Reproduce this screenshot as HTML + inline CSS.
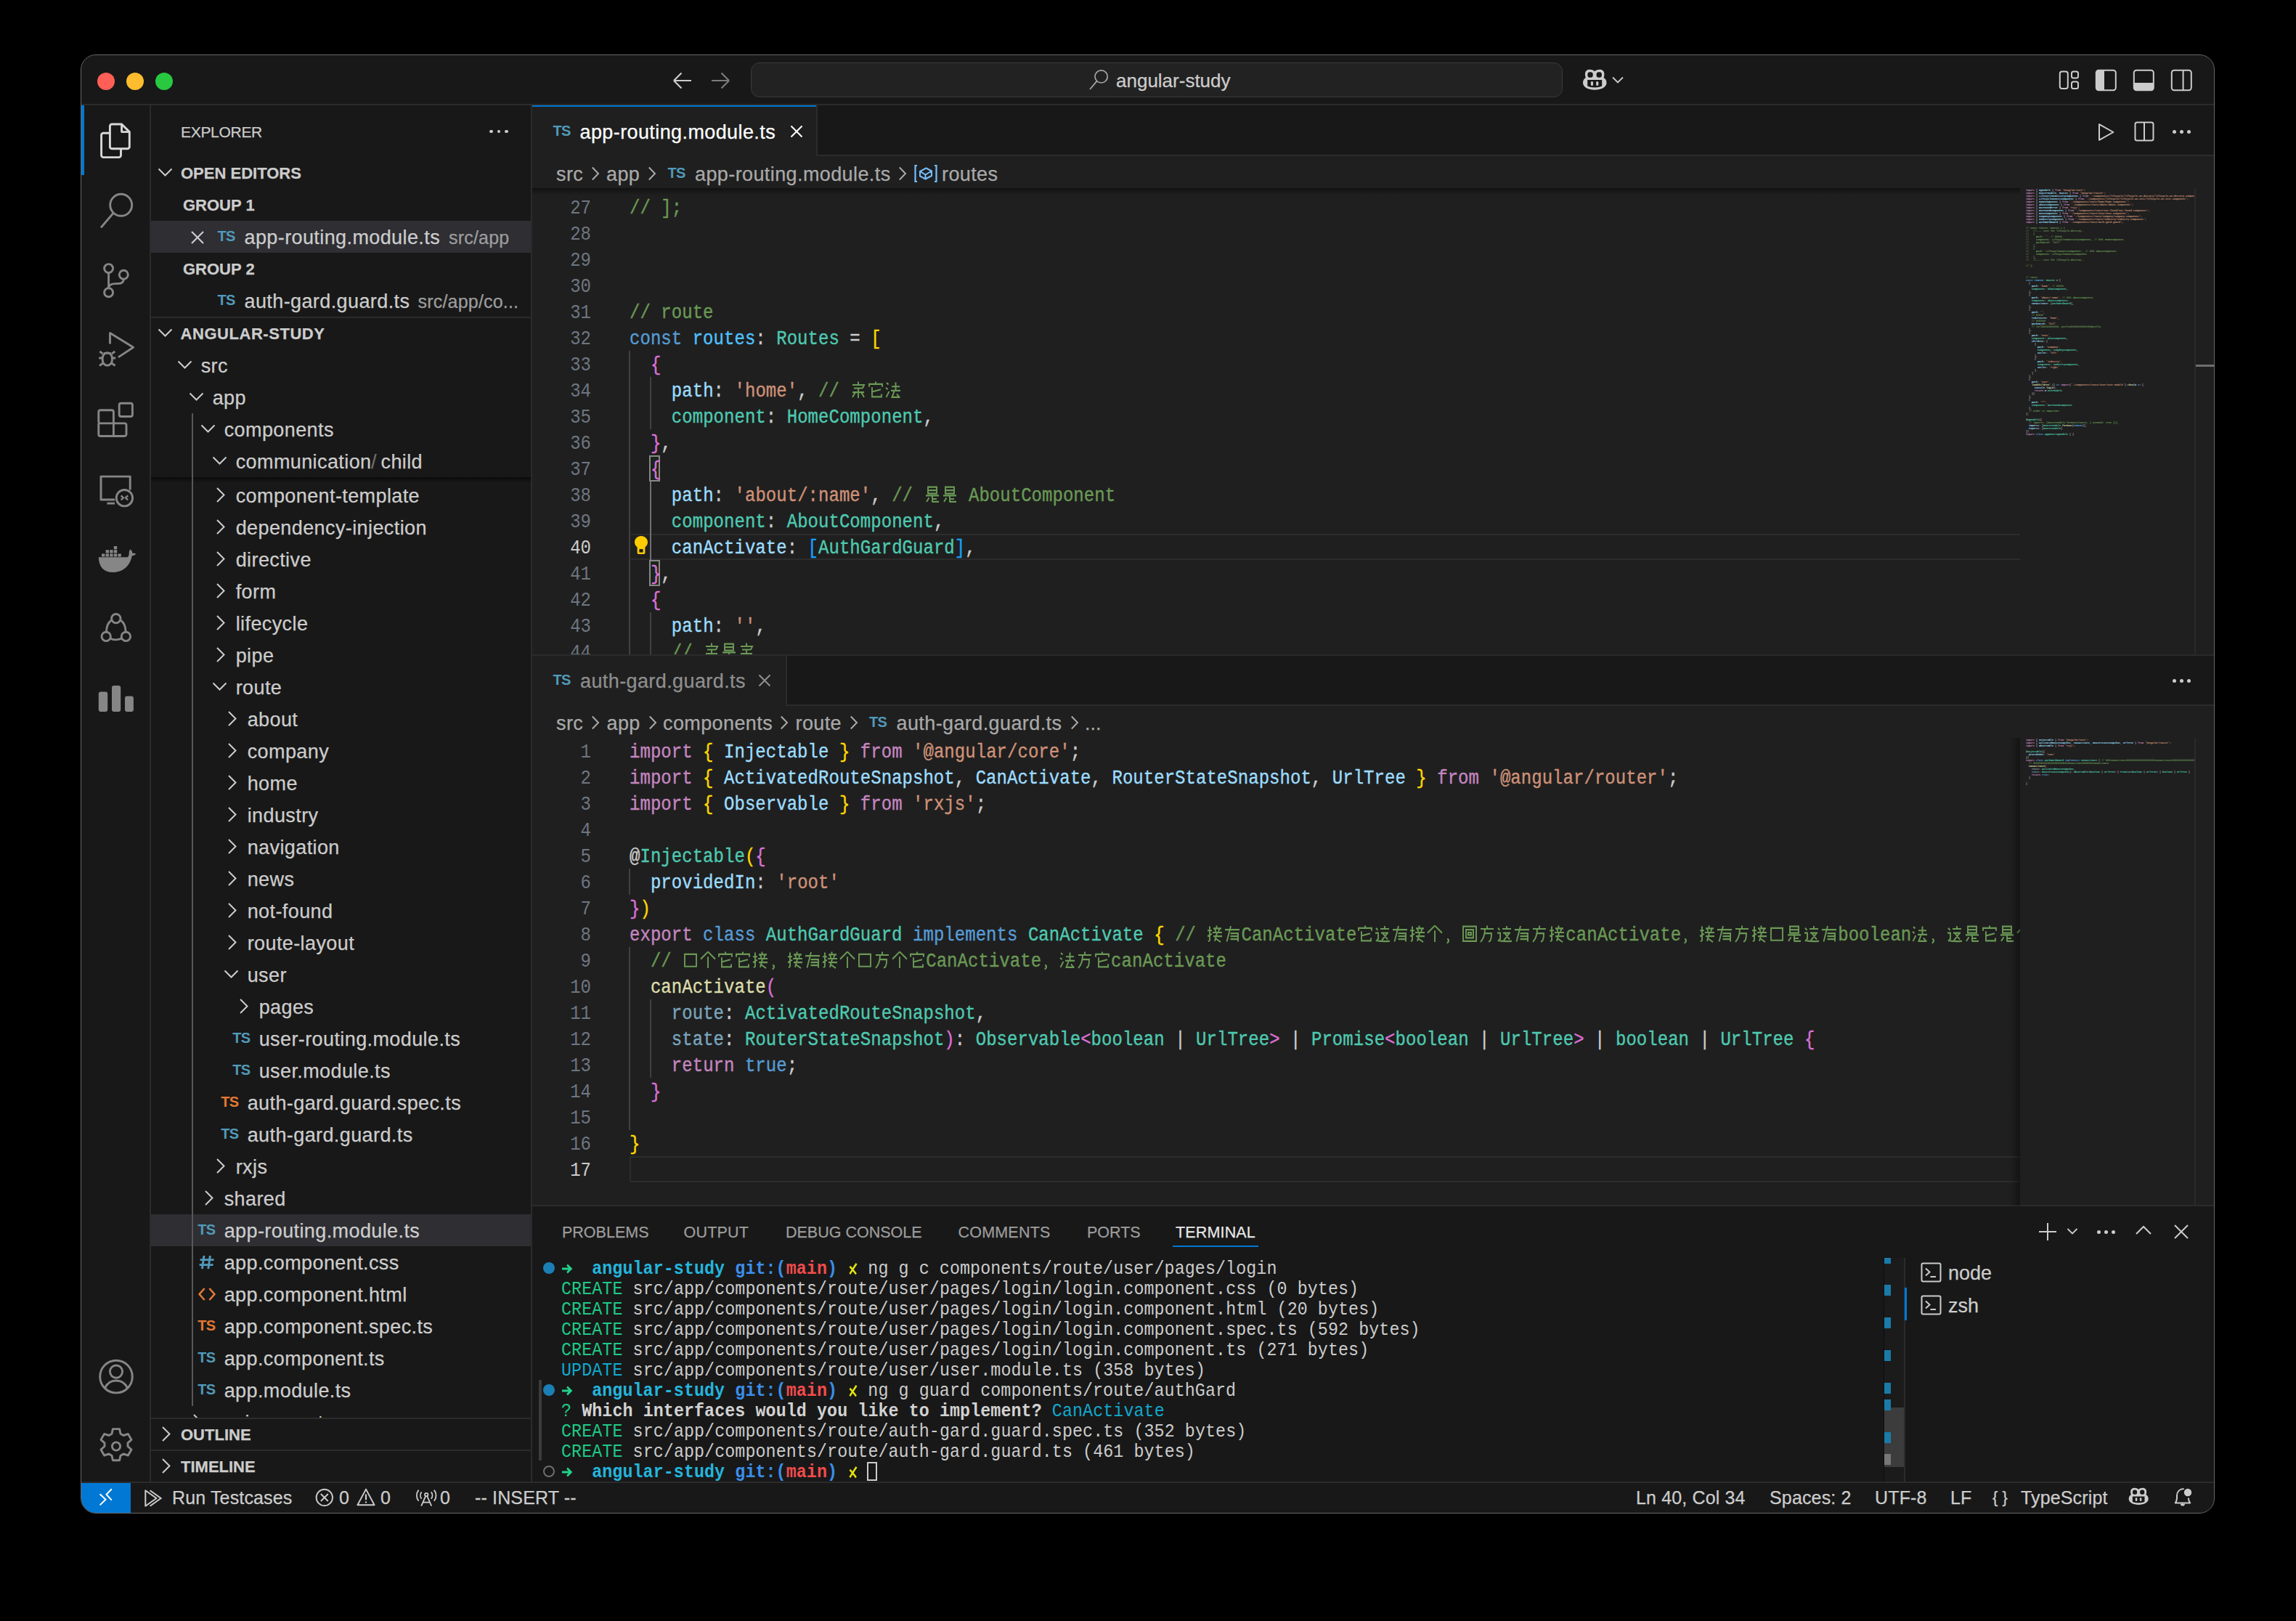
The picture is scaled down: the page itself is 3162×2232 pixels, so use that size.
<!DOCTYPE html><html><head><meta charset='utf-8'><style>
*{box-sizing:border-box;margin:0;padding:0}
html,body{width:3162px;height:2232px;background:#000;overflow:hidden}
body{position:relative;font-family:"Liberation Sans",sans-serif;color:#cccccc}
.a{position:absolute}
#win{position:absolute;left:0;top:0;width:3162px;height:2232px;clip-path:inset(76px 113px 149px 112px round 20px);background:#181818}
#frame{position:absolute;left:111px;top:75px;width:2939px;height:2009px;border:1.5px solid #676767;border-radius:21px;pointer-events:none}
.mono{font-family:"Liberation Mono",monospace}
.nw{white-space:pre}
svg{display:block;overflow:visible}
.t{position:absolute;white-space:pre;line-height:1;-webkit-text-stroke:0.25px currentColor}
</style></head><body><div id='win'><div class='a' style='left:112px;top:143px;width:2937px;height:2px;background:#2b2b2b;'></div><div class='a' style='left:206px;top:145px;width:2px;height:1896px;background:#2b2b2b;'></div><div class='a' style='left:731px;top:145px;width:2px;height:1896px;background:#2b2b2b;'></div><div class='a' style='left:733px;top:145px;width:2316px;height:1515px;background:#1f1f1f;'></div><div class='a' style='left:733px;top:1660px;width:2316px;height:381px;background:#181818;'></div><div class='a' style='left:733px;top:1659px;width:2316px;height:2px;background:#2b2b2b;'></div><div class='a' style='left:112px;top:2040px;width:2937px;height:2px;background:#2b2b2b;'></div><div class='a' style='left:133.8px;top:99.8px;width:24.4px;height:24.4px;border-radius:50%;background:#ff5f57'></div><div class='a' style='left:173.8px;top:99.8px;width:24.4px;height:24.4px;border-radius:50%;background:#febc2e'></div><div class='a' style='left:213.8px;top:99.8px;width:24.4px;height:24.4px;border-radius:50%;background:#28c840'></div><svg class='a' style='left:926px;top:98px;' width='28' height='26' viewBox='0 0 28 26'><path d='M2 13H26M2 13L12.5 2.5M2 13L12.5 23.5' stroke='#cccccc' stroke-width='2.2' fill='none'/></svg><svg class='a' style='left:978px;top:98px;' width='28' height='26' viewBox='0 0 28 26'><path d='M26 13H2M26 13L15.5 2.5M26 13L15.5 23.5' stroke='#7b7b7b' stroke-width='2.2' fill='none'/></svg><div class='a' style='left:1034px;top:86px;width:1118px;height:48px;border-radius:12px;background:#222222;border:1.5px solid #3b3b3b'></div><svg class='a' style='left:1498px;top:94px;' width='32' height='32' viewBox='0 0 32 32'><circle cx='18.6' cy='11.4' r='8.6' stroke='#a6a6a6' stroke-width='1.7' fill='none'/><path d='M12.6 17.6L3 29' stroke='#a6a6a6' stroke-width='1.8' fill='none'/></svg><div class='t' style='left:1537px;top:81.0px;height:60px;line-height:60px;font-family:"Liberation Sans";font-size:26px;color:#cccccc;font-weight:normal;letter-spacing:0px;'>angular-study</div><svg class='a' style='left:2178px;top:94px;' width='36' height='32' viewBox='0 0 36 32'><path fill='#cccccc' d='M5 8C5 3.5 8 1.8 11.5 1.8c3 0 5.3 1 6.7 2.4 1.4-1.4 3.7-2.4 6.7-2.4 3.5 0 6.5 1.7 6.5 6.2 0 2.5-.4 4-.9 5 2.5 1.5 4 3.8 4 7 0 6-7.5 9.8-16.3 9.8S2 26 2 20c0-3.2 1.4-5.5 3.9-7-.5-1-.9-2.5-.9-5z'/><rect x='8.4' y='5.3' width='7.3' height='7.5' rx='3' fill='#181818'/><rect x='20.6' y='5.3' width='7.3' height='7.5' rx='3' fill='#181818'/><path fill='#181818' d='M8.2 16H28.2V24.6c-2.4 1.3-5.9 2-10 2s-7.6-.7-10-2z'/><rect x='12.9' y='18' width='3.1' height='5.9' rx='1.5' fill='#cccccc'/><rect x='20.2' y='18' width='3.1' height='5.9' rx='1.5' fill='#cccccc'/></svg><svg class='a' style='left:2219px;top:104px;' width='18' height='12' viewBox='0 0 18 12'><path d='M2 2.5L9 9.5L16 2.5' stroke='#cccccc' stroke-width='1.8' fill='none'/></svg><svg class='a' style='left:2834px;top:96px;' width='30' height='28' viewBox='0 0 30 28'><rect x='2.8' y='2.6' width='11' height='23.4' rx='3' stroke='#cccccc' stroke-width='2' fill='none'/><rect x='19' y='2.6' width='9' height='9' rx='2.5' stroke='#cccccc' stroke-width='2' fill='none'/><rect x='19' y='16.6' width='9' height='9.4' rx='2.5' stroke='#cccccc' stroke-width='2' fill='none'/></svg><svg class='a' style='left:2884px;top:94px;' width='32' height='32' viewBox='0 0 32 32'><rect x='2.8' y='2.8' width='27' height='27.4' rx='3.5' stroke='#cccccc' stroke-width='2' fill='none'/><path d='M3 6.3a3.5 3.5 0 0 1 3.5-3.5H14V30.2H6.5A3.5 3.5 0 0 1 3 26.7z' fill='#cccccc'/></svg><svg class='a' style='left:2936px;top:94px;' width='32' height='32' viewBox='0 0 32 32'><rect x='2.8' y='2.8' width='27' height='27.4' rx='3.5' stroke='#cccccc' stroke-width='2' fill='none'/><path d='M3 20H29.8V26.7a3.5 3.5 0 0 1-3.5 3.5H6.5A3.5 3.5 0 0 1 3 26.7z' fill='#cccccc'/></svg><svg class='a' style='left:2988px;top:94px;' width='32' height='32' viewBox='0 0 32 32'><rect x='2.8' y='2.8' width='27' height='27.4' rx='3.5' stroke='#cccccc' stroke-width='2' fill='none'/><path d='M18.6 3V30' stroke='#cccccc' stroke-width='2'/></svg><div class='a' style='left:112px;top:145px;width:4px;height:96px;background:#0078d4;'></div><svg class='a' style='left:112px;top:145px' width='96' height='96' viewBox='0 0 96 96' fill='none' stroke='#d7d7d7' stroke-width='2.9' stroke-linejoin='round'><path d='M42.4 26H55.6L66.3 36.6V56.9a2.8 2.8 0 0 1-2.8 2.8H42.2a2.8 2.8 0 0 1-2.8-2.8V28.8A2.8 2.8 0 0 1 42.2 26z'/><path d='M55.6 26.4V36.6H66'/><path d='M39.4 38.3H30.4a2.8 2.8 0 0 0-2.8 2.8V68.8a2.8 2.8 0 0 0 2.8 2.8H51.7a2.8 2.8 0 0 0 2.8-2.8V59.7'/></svg><svg class='a' style='left:112px;top:241px' width='96' height='96' viewBox='0 0 96 96' fill='none' stroke='#868686' stroke-width='2.9' stroke-linejoin='round'><circle cx='54.7' cy='41.3' r='15'/><path d='M44 52.5L27 72.4'/></svg><svg class='a' style='left:112px;top:338px' width='96' height='96' viewBox='0 0 96 96' fill='none' stroke='#868686' stroke-width='2.9' stroke-linejoin='round'><circle cx='37.6' cy='31.6' r='6'/><circle cx='37.6' cy='64.7' r='6'/><circle cx='58.3' cy='40.3' r='6'/><path d='M37.6 37.6V58.7'/><path d='M58.3 46.3C58.3 52 54 52.6 47 52.6 41 52.6 37.6 54.5 37.6 58.7'/></svg><svg class='a' style='left:112px;top:434px' width='96' height='96' viewBox='0 0 96 96' fill='none' stroke='#868686' stroke-width='2.9' stroke-linejoin='round'><path d='M39.5 39.4V24.6L71.6 44.3L50.9 57.9'/><path d='M35.8 51.8c4 0 6.6 3.4 6.6 7.4v2.6c0 4-2.8 7.4-6.6 7.4s-6.6-3.4-6.6-7.4v-2.6c0-4 2.6-7.4 6.6-7.4zM29 59H24.2M42.4 59h4.8M29.2 66.5l-4.2 3M42.4 66.5l4.2 3M29.4 53.2L25.4 49.9M42.2 53.2l4-3.3M30.6 52.4h10.4'/></svg><svg class='a' style='left:112px;top:530px' width='96' height='96' viewBox='0 0 96 96' fill='none' stroke='#868686' stroke-width='2.9' stroke-linejoin='round'><path d='M26.3 34.8H41.9a2.5 2.5 0 0 1 2.5 2.5V52.9H26.3a2.5 2.5 0 0 1-2.5-2.5V37.3a2.5 2.5 0 0 1 2.5-2.5z'/><path d='M23.8 52.9V68a2.5 2.5 0 0 0 2.5 2.5H44.4V52.9M44.4 52.9H59.5a2.5 2.5 0 0 1 2.5 2.5V68a2.5 2.5 0 0 1-2.5 2.5H44.4'/><rect x='52.2' y='25.3' width='18.2' height='18.2' rx='2.5'/></svg><svg class='a' style='left:112px;top:628px' width='96' height='96' viewBox='0 0 96 96' fill='none' stroke='#868686' stroke-width='2.9' stroke-linejoin='round'><path d='M46 60H27V28.1H67.2V46.6'/><path d='M35.4 65.1H46'/><circle cx='59.4' cy='57.7' r='11.2'/><path d='M54.6 54.4l3.4 3-3.4 3M64.2 54.4l-3.4 3 3.4 3' stroke-width='2.4'/></svg><svg class='a' style='left:112px;top:723px' width='96' height='96' viewBox='0 0 96 96' fill='none' stroke='#868686' stroke-width='2.9' stroke-linejoin='round'><path d='M23.8 44.2H63.5c1.6-1 2.4-3.2 2.2-5.8-.1-1.4.5-3.5 1.8-4.9 1.9 1.3 2.9 3.4 3 5.5 1.5-.5 3.6-.4 4.6.5-.9 1.9-3 2.7-5.2 2.7C67.1 55.6 58.2 65 43.4 65 31 65 24.2 57.6 23.8 44.2z' fill='#868686' stroke='none'/><path d='M28 39.4h4.4v4.2H28zM33.6 39.4H38v4.2h-4.4zM39.2 39.4h4.4v4.2h-4.4zM44.8 39.4h4.4v4.2h-4.4zM50.4 39.4h4.4v4.2h-4.4zM33.6 34.2H38v4.2h-4.4zM39.2 34.2h4.4v4.2h-4.4zM44.8 34.2h4.4v4.2h-4.4zM44.8 29h4.4v4.2h-4.4z' fill='#868686' stroke='none'/></svg><svg class='a' style='left:112px;top:816px' width='96' height='96' viewBox='0 0 96 96' fill='none' stroke='#868686' stroke-width='2.9' stroke-linejoin='round'><circle cx='47.8' cy='35.7' r='6.2'/><circle cx='34.2' cy='60.4' r='6.2'/><circle cx='61.4' cy='60.4' r='6.2'/><path d='M41.8 37.6C37.4 40.6 34.6 46.4 34.4 54.2M53.8 37.6c4.4 3 7.2 8.8 7.4 16.6M40.2 63.2c4.6 2.2 10 2.2 15.2 0'/></svg><svg class='a' style='left:112px;top:914px' width='96' height='96' viewBox='0 0 96 96' fill='none' stroke='#868686' stroke-width='2.9' stroke-linejoin='round'><rect x='23.8' y='38.6' width='12.4' height='27.3' rx='3' fill='#868686' stroke='none'/><rect x='42' y='29.9' width='12.2' height='36' rx='3' fill='#868686' stroke='none'/><rect x='60' y='44.4' width='11.9' height='21.5' rx='3' fill='#868686' stroke='none'/></svg><svg class='a' style='left:112px;top:1848px' width='96' height='96' viewBox='0 0 96 96' fill='none' stroke='#868686' stroke-width='2.9' stroke-linejoin='round'><circle cx='48' cy='47.6' r='22.3'/><circle cx='48' cy='40.6' r='8.6'/><path d='M32.6 63.2c3-6.8 8.6-10.2 15.4-10.2s12.4 3.4 15.4 10.2'/></svg><svg class='a' style='left:112px;top:1943px' width='96' height='96' viewBox='0 0 96 96' fill='none' stroke='#868686' stroke-width='2.9' stroke-linejoin='round'><path d='M43.4 24.6h9.2l1.4 6.6 4 2.3 6.4-2.1 4.6 8-5 4.5v4.6l5 4.5-4.6 8-6.4-2.1-4 2.3-1.4 6.6h-9.2l-1.4-6.6-4-2.3-6.4 2.1-4.6-8 5-4.5v-4.6l-5-4.5 4.6-8 6.4 2.1 4-2.3z'/><circle cx='48' cy='48.5' r='5.6'/></svg><div class='a' style='left:112px;top:2042px;width:68px;height:41px;background:#0078d4'></div><svg class='a' style='left:112px;top:2040px;' width='70' height='44' viewBox='0 0 70 44'><path d='M25.6 17.3L33.5 24.8L25.6 32.4M41.8 10.2L34.5 17.8L41.8 25.6' stroke='#ffffff' stroke-width='2' fill='none'/></svg><svg class='a' style='left:192px;top:2040px;' width='36' height='44' viewBox='0 0 36 44'><path d='M8.3 12.3L23.5 23L8.3 33.7z' stroke='#cccccc' stroke-width='2' fill='none' stroke-linejoin='round'/><path d='M14.6 12.3L29.6 23L14.6 33.7' stroke='#cccccc' stroke-width='2' fill='none'/></svg><div class='t' style='left:237px;top:2032.0px;height:60px;line-height:60px;font-family:"Liberation Sans";font-size:25px;color:#cccccc;font-weight:normal;letter-spacing:0.15px;'>Run Testcases</div><svg class='a' style='left:430px;top:2040px;' width='34' height='44' viewBox='0 0 34 44'><circle cx='16.8' cy='22' r='11.2' stroke='#cccccc' stroke-width='1.9' fill='none'/><path d='M11.8 17L21.8 27M21.8 17L11.8 27' stroke='#cccccc' stroke-width='1.9'/></svg><div class='t' style='left:467px;top:2032.0px;height:60px;line-height:60px;font-family:"Liberation Sans";font-size:25px;color:#cccccc;font-weight:normal;letter-spacing:0.15px;'>0</div><svg class='a' style='left:488px;top:2040px;' width='32' height='44' viewBox='0 0 32 44'><path d='M16 10.6L27.6 32.2H4.4z' stroke='#cccccc' stroke-width='1.9' fill='none' stroke-linejoin='round'/><path d='M16 17.6V25.2M16 27.4V29.6' stroke='#cccccc' stroke-width='2.2'/></svg><div class='t' style='left:524px;top:2032.0px;height:60px;line-height:60px;font-family:"Liberation Sans";font-size:25px;color:#cccccc;font-weight:normal;letter-spacing:0.15px;'>0</div><svg class='a' style='left:570px;top:2040px;' width='34' height='44' viewBox='0 0 34 44'><path d='M6.6 11.6a12 12 0 0 0 0 15.2M10.6 14.4a7.4 7.4 0 0 0 0 9.4M27.8 11.6a12 12 0 0 1 0 15.2M23.8 14.4a7.4 7.4 0 0 1 0 9.4' stroke='#cccccc' stroke-width='1.8' fill='none'/><circle cx='17.2' cy='18' r='2.2' stroke='#cccccc' stroke-width='1.8' fill='none'/><path d='M16 20.4L10.2 33.6M18.4 20.4L24.2 33.6M12.6 28.6H21.8' stroke='#cccccc' stroke-width='1.8' fill='none'/></svg><div class='t' style='left:606px;top:2032.0px;height:60px;line-height:60px;font-family:"Liberation Sans";font-size:25px;color:#cccccc;font-weight:normal;letter-spacing:0.15px;'>0</div><div class='t' style='left:654px;top:2032.0px;height:60px;line-height:60px;font-family:"Liberation Sans";font-size:25px;color:#cccccc;font-weight:normal;letter-spacing:0.15px;'>-- INSERT --</div><div class='t' style='left:2253px;top:2032.0px;height:60px;line-height:60px;font-family:"Liberation Sans";font-size:25px;color:#cccccc;font-weight:normal;letter-spacing:0.15px;'>Ln 40, Col 34</div><div class='t' style='left:2437px;top:2032.0px;height:60px;line-height:60px;font-family:"Liberation Sans";font-size:25px;color:#cccccc;font-weight:normal;letter-spacing:0.15px;'>Spaces: 2</div><div class='t' style='left:2582px;top:2032.0px;height:60px;line-height:60px;font-family:"Liberation Sans";font-size:25px;color:#cccccc;font-weight:normal;letter-spacing:0.15px;'>UTF-8</div><div class='t' style='left:2686px;top:2032.0px;height:60px;line-height:60px;font-family:"Liberation Sans";font-size:25px;color:#cccccc;font-weight:normal;letter-spacing:0.15px;'>LF</div><div class='t' style='left:2744px;top:2032.0px;height:60px;line-height:60px;font-family:"Liberation Sans";font-size:22px;color:#cccccc;font-weight:normal;letter-spacing:0px;'>{ }</div><div class='t' style='left:2783px;top:2032.0px;height:60px;line-height:60px;font-family:"Liberation Sans";font-size:25px;color:#cccccc;font-weight:normal;letter-spacing:0.15px;'>TypeScript</div><svg class='a' style='left:2930px;top:2047px;' width='30' height='27' viewBox='0 0 36 32'><path fill='#cccccc' d='M5 8C5 3.5 8 1.8 11.5 1.8c3 0 5.3 1 6.7 2.4 1.4-1.4 3.7-2.4 6.7-2.4 3.5 0 6.5 1.7 6.5 6.2 0 2.5-.4 4-.9 5 2.5 1.5 4 3.8 4 7 0 6-7.5 9.8-16.3 9.8S2 26 2 20c0-3.2 1.4-5.5 3.9-7-.5-1-.9-2.5-.9-5z'/><rect x='8.4' y='5.3' width='7.3' height='7.5' rx='3' fill='#181818'/><rect x='20.6' y='5.3' width='7.3' height='7.5' rx='3' fill='#181818'/><path fill='#181818' d='M8.2 16H28.2V24.6c-2.4 1.3-5.9 2-10 2s-7.6-.7-10-2z'/><rect x='12.9' y='18' width='3.1' height='5.9' rx='1.5' fill='#cccccc'/><rect x='20.2' y='18' width='3.1' height='5.9' rx='1.5' fill='#cccccc'/></svg><svg class='a' style='left:2990px;top:2020px;' width='40' height='60' viewBox='0 0 40 60'><path d='M23.8 42.6c.2 3 .9 5.2 2.4 6.8H5.8c1.5-1.6 2-3.8 2.2-6.8L8 39c.2-5.2 3.8-8.8 9.6-9' stroke='#cccccc' stroke-width='2' fill='none' stroke-linejoin='round'/><path d='M12.8 50.4a3.1 3.1 0 0 0 6.2 0z' fill='#cccccc'/><circle cx='23' cy='35' r='5.2' fill='#cccccc'/></svg><div class='t' style='left:249px;top:152.0px;height:60px;line-height:60px;font-family:"Liberation Sans";font-size:21px;color:#cccccc;font-weight:normal;letter-spacing:-0.3px;'>EXPLORER</div><div class='a' style='left:674.2px;top:178.7px;width:4.6px;height:4.6px;border-radius:50%;background:#cccccc'></div><div class='a' style='left:684.7px;top:178.7px;width:4.6px;height:4.6px;border-radius:50%;background:#cccccc'></div><div class='a' style='left:695.2px;top:178.7px;width:4.6px;height:4.6px;border-radius:50%;background:#cccccc'></div><svg class='a' style='left:217px;top:230px;' width='22' height='16' viewBox='0 0 22 16'><path d='M1.5 2.5L10.5 11.5L19.5 2.5' stroke='#cccccc' stroke-width='2.0' fill='none'/></svg><div class='t' style='left:249px;top:209.0px;height:60px;line-height:60px;font-family:"Liberation Sans";font-size:22px;color:#cccccc;font-weight:bold;letter-spacing:0px;'>OPEN EDITORS</div><div class='t' style='left:252px;top:253.0px;height:60px;line-height:60px;font-family:"Liberation Sans";font-size:22px;color:#cccccc;font-weight:bold;letter-spacing:0px;'>GROUP 1</div><div class='a' style='left:208px;top:304px;width:523px;height:44px;background:#2e2e33;'></div><svg class='a' style='left:261px;top:316px;' width='22' height='22' viewBox='0 0 22 22'><path d='M3 3L19 19M19 3L3 19' stroke='#cccccc' stroke-width='2.2'/></svg><div class='t' style='left:299.5px;top:295px;height:60px;line-height:60px;font-size:20px;font-weight:bold;color:#519aba;letter-spacing:-0.7px;-webkit-text-stroke:0'>TS</div><div class='t' style='left:336.5px;top:297.0px;height:60px;line-height:60px;font-family:"Liberation Sans";font-size:27px;color:#cccccc;font-weight:normal;letter-spacing:0.4px;'>app-routing.module.ts</div><div class='t' style='left:618px;top:297.0px;height:60px;line-height:60px;font-family:"Liberation Sans";font-size:25px;color:#9d9d9d;font-weight:normal;letter-spacing:0.2px;'>src/app</div><div class='t' style='left:252px;top:341.0px;height:60px;line-height:60px;font-family:"Liberation Sans";font-size:22px;color:#cccccc;font-weight:bold;letter-spacing:0px;'>GROUP 2</div><div class='t' style='left:299.5px;top:383px;height:60px;line-height:60px;font-size:20px;font-weight:bold;color:#519aba;letter-spacing:-0.7px;-webkit-text-stroke:0'>TS</div><div class='t' style='left:336.5px;top:385.0px;height:60px;line-height:60px;font-family:"Liberation Sans";font-size:27px;color:#cccccc;font-weight:normal;letter-spacing:0.4px;'>auth-gard.guard.ts</div><div class='t' style='left:575.5px;top:385.0px;height:60px;line-height:60px;font-family:"Liberation Sans";font-size:25px;color:#9d9d9d;font-weight:normal;letter-spacing:0.2px;'>src/app/co...</div><div class='a' style='left:208px;top:436px;width:523px;height:2px;background:#2b2b2b;'></div><svg class='a' style='left:217px;top:451px;' width='22' height='16' viewBox='0 0 22 16'><path d='M1.5 2.5L10.5 11.5L19.5 2.5' stroke='#cccccc' stroke-width='2.0' fill='none'/></svg><div class='t' style='left:248.5px;top:430.0px;height:60px;line-height:60px;font-family:"Liberation Sans";font-size:22px;color:#cccccc;font-weight:bold;letter-spacing:0.55px;'>ANGULAR-STUDY</div><div class='a' style='left:208px;top:657px;width:523px;height:1296px;overflow:hidden'><div class='a' style='left:-208px;top:-657px;width:3162px;height:2232px'><svg class='a' style='left:296.7px;top:671px;' width='14' height='22' viewBox='0 0 14 22'><path d='M2 1L11.5 10.5L2 20' stroke='#cccccc' stroke-width='2.0' fill='none'/></svg><div class='t' style='left:324.7px;top:653.0px;height:60px;line-height:60px;font-family:"Liberation Sans";font-size:27px;color:#cccccc;font-weight:normal;letter-spacing:0.4px;'>component-template</div><svg class='a' style='left:296.7px;top:715px;' width='14' height='22' viewBox='0 0 14 22'><path d='M2 1L11.5 10.5L2 20' stroke='#cccccc' stroke-width='2.0' fill='none'/></svg><div class='t' style='left:324.7px;top:697.0px;height:60px;line-height:60px;font-family:"Liberation Sans";font-size:27px;color:#cccccc;font-weight:normal;letter-spacing:0.4px;'>dependency-injection</div><svg class='a' style='left:296.7px;top:759px;' width='14' height='22' viewBox='0 0 14 22'><path d='M2 1L11.5 10.5L2 20' stroke='#cccccc' stroke-width='2.0' fill='none'/></svg><div class='t' style='left:324.7px;top:741.0px;height:60px;line-height:60px;font-family:"Liberation Sans";font-size:27px;color:#cccccc;font-weight:normal;letter-spacing:0.4px;'>directive</div><svg class='a' style='left:296.7px;top:803px;' width='14' height='22' viewBox='0 0 14 22'><path d='M2 1L11.5 10.5L2 20' stroke='#cccccc' stroke-width='2.0' fill='none'/></svg><div class='t' style='left:324.7px;top:785.0px;height:60px;line-height:60px;font-family:"Liberation Sans";font-size:27px;color:#cccccc;font-weight:normal;letter-spacing:0.4px;'>form</div><svg class='a' style='left:296.7px;top:847px;' width='14' height='22' viewBox='0 0 14 22'><path d='M2 1L11.5 10.5L2 20' stroke='#cccccc' stroke-width='2.0' fill='none'/></svg><div class='t' style='left:324.7px;top:829.0px;height:60px;line-height:60px;font-family:"Liberation Sans";font-size:27px;color:#cccccc;font-weight:normal;letter-spacing:0.4px;'>lifecycle</div><svg class='a' style='left:296.7px;top:891px;' width='14' height='22' viewBox='0 0 14 22'><path d='M2 1L11.5 10.5L2 20' stroke='#cccccc' stroke-width='2.0' fill='none'/></svg><div class='t' style='left:324.7px;top:873.0px;height:60px;line-height:60px;font-family:"Liberation Sans";font-size:27px;color:#cccccc;font-weight:normal;letter-spacing:0.4px;'>pipe</div><svg class='a' style='left:291.7px;top:938px;' width='22' height='16' viewBox='0 0 22 16'><path d='M1.5 2.5L10.5 11.5L19.5 2.5' stroke='#cccccc' stroke-width='2.0' fill='none'/></svg><div class='t' style='left:324.7px;top:917.0px;height:60px;line-height:60px;font-family:"Liberation Sans";font-size:27px;color:#cccccc;font-weight:normal;letter-spacing:0.4px;'>route</div><svg class='a' style='left:312.7px;top:979px;' width='14' height='22' viewBox='0 0 14 22'><path d='M2 1L11.5 10.5L2 20' stroke='#cccccc' stroke-width='2.0' fill='none'/></svg><div class='t' style='left:340.7px;top:961.0px;height:60px;line-height:60px;font-family:"Liberation Sans";font-size:27px;color:#cccccc;font-weight:normal;letter-spacing:0.4px;'>about</div><svg class='a' style='left:312.7px;top:1023px;' width='14' height='22' viewBox='0 0 14 22'><path d='M2 1L11.5 10.5L2 20' stroke='#cccccc' stroke-width='2.0' fill='none'/></svg><div class='t' style='left:340.7px;top:1005.0px;height:60px;line-height:60px;font-family:"Liberation Sans";font-size:27px;color:#cccccc;font-weight:normal;letter-spacing:0.4px;'>company</div><svg class='a' style='left:312.7px;top:1067px;' width='14' height='22' viewBox='0 0 14 22'><path d='M2 1L11.5 10.5L2 20' stroke='#cccccc' stroke-width='2.0' fill='none'/></svg><div class='t' style='left:340.7px;top:1049.0px;height:60px;line-height:60px;font-family:"Liberation Sans";font-size:27px;color:#cccccc;font-weight:normal;letter-spacing:0.4px;'>home</div><svg class='a' style='left:312.7px;top:1111px;' width='14' height='22' viewBox='0 0 14 22'><path d='M2 1L11.5 10.5L2 20' stroke='#cccccc' stroke-width='2.0' fill='none'/></svg><div class='t' style='left:340.7px;top:1093.0px;height:60px;line-height:60px;font-family:"Liberation Sans";font-size:27px;color:#cccccc;font-weight:normal;letter-spacing:0.4px;'>industry</div><svg class='a' style='left:312.7px;top:1155px;' width='14' height='22' viewBox='0 0 14 22'><path d='M2 1L11.5 10.5L2 20' stroke='#cccccc' stroke-width='2.0' fill='none'/></svg><div class='t' style='left:340.7px;top:1137.0px;height:60px;line-height:60px;font-family:"Liberation Sans";font-size:27px;color:#cccccc;font-weight:normal;letter-spacing:0.4px;'>navigation</div><svg class='a' style='left:312.7px;top:1199px;' width='14' height='22' viewBox='0 0 14 22'><path d='M2 1L11.5 10.5L2 20' stroke='#cccccc' stroke-width='2.0' fill='none'/></svg><div class='t' style='left:340.7px;top:1181.0px;height:60px;line-height:60px;font-family:"Liberation Sans";font-size:27px;color:#cccccc;font-weight:normal;letter-spacing:0.4px;'>news</div><svg class='a' style='left:312.7px;top:1243px;' width='14' height='22' viewBox='0 0 14 22'><path d='M2 1L11.5 10.5L2 20' stroke='#cccccc' stroke-width='2.0' fill='none'/></svg><div class='t' style='left:340.7px;top:1225.0px;height:60px;line-height:60px;font-family:"Liberation Sans";font-size:27px;color:#cccccc;font-weight:normal;letter-spacing:0.4px;'>not-found</div><svg class='a' style='left:312.7px;top:1287px;' width='14' height='22' viewBox='0 0 14 22'><path d='M2 1L11.5 10.5L2 20' stroke='#cccccc' stroke-width='2.0' fill='none'/></svg><div class='t' style='left:340.7px;top:1269.0px;height:60px;line-height:60px;font-family:"Liberation Sans";font-size:27px;color:#cccccc;font-weight:normal;letter-spacing:0.4px;'>route-layout</div><svg class='a' style='left:307.7px;top:1334px;' width='22' height='16' viewBox='0 0 22 16'><path d='M1.5 2.5L10.5 11.5L19.5 2.5' stroke='#cccccc' stroke-width='2.0' fill='none'/></svg><div class='t' style='left:340.7px;top:1313.0px;height:60px;line-height:60px;font-family:"Liberation Sans";font-size:27px;color:#cccccc;font-weight:normal;letter-spacing:0.4px;'>user</div><svg class='a' style='left:328.7px;top:1375px;' width='14' height='22' viewBox='0 0 14 22'><path d='M2 1L11.5 10.5L2 20' stroke='#cccccc' stroke-width='2.0' fill='none'/></svg><div class='t' style='left:356.7px;top:1357.0px;height:60px;line-height:60px;font-family:"Liberation Sans";font-size:27px;color:#cccccc;font-weight:normal;letter-spacing:0.4px;'>pages</div><div class='t' style='left:320.2px;top:1399px;height:60px;line-height:60px;font-size:20px;font-weight:bold;color:#519aba;letter-spacing:-0.7px;-webkit-text-stroke:0'>TS</div><div class='t' style='left:356.7px;top:1401.0px;height:60px;line-height:60px;font-family:"Liberation Sans";font-size:27px;color:#cccccc;font-weight:normal;letter-spacing:0.4px;'>user-routing.module.ts</div><div class='t' style='left:320.2px;top:1443px;height:60px;line-height:60px;font-size:20px;font-weight:bold;color:#519aba;letter-spacing:-0.7px;-webkit-text-stroke:0'>TS</div><div class='t' style='left:356.7px;top:1445.0px;height:60px;line-height:60px;font-family:"Liberation Sans";font-size:27px;color:#cccccc;font-weight:normal;letter-spacing:0.4px;'>user.module.ts</div><div class='t' style='left:304.2px;top:1487px;height:60px;line-height:60px;font-size:20px;font-weight:bold;color:#e37933;letter-spacing:-0.7px;-webkit-text-stroke:0'>TS</div><div class='t' style='left:340.7px;top:1489.0px;height:60px;line-height:60px;font-family:"Liberation Sans";font-size:27px;color:#cccccc;font-weight:normal;letter-spacing:0.4px;'>auth-gard.guard.spec.ts</div><div class='t' style='left:304.2px;top:1531px;height:60px;line-height:60px;font-size:20px;font-weight:bold;color:#519aba;letter-spacing:-0.7px;-webkit-text-stroke:0'>TS</div><div class='t' style='left:340.7px;top:1533.0px;height:60px;line-height:60px;font-family:"Liberation Sans";font-size:27px;color:#cccccc;font-weight:normal;letter-spacing:0.4px;'>auth-gard.guard.ts</div><svg class='a' style='left:296.7px;top:1595px;' width='14' height='22' viewBox='0 0 14 22'><path d='M2 1L11.5 10.5L2 20' stroke='#cccccc' stroke-width='2.0' fill='none'/></svg><div class='t' style='left:324.7px;top:1577.0px;height:60px;line-height:60px;font-family:"Liberation Sans";font-size:27px;color:#cccccc;font-weight:normal;letter-spacing:0.4px;'>rxjs</div><svg class='a' style='left:280.7px;top:1639px;' width='14' height='22' viewBox='0 0 14 22'><path d='M2 1L11.5 10.5L2 20' stroke='#cccccc' stroke-width='2.0' fill='none'/></svg><div class='t' style='left:308.7px;top:1621.0px;height:60px;line-height:60px;font-family:"Liberation Sans";font-size:27px;color:#cccccc;font-weight:normal;letter-spacing:0.4px;'>shared</div><div class='a' style='left:208px;top:1672px;width:523px;height:44px;background:#2e2e33;'></div><div class='t' style='left:272.2px;top:1663px;height:60px;line-height:60px;font-size:20px;font-weight:bold;color:#519aba;letter-spacing:-0.7px;-webkit-text-stroke:0'>TS</div><div class='t' style='left:308.7px;top:1665.0px;height:60px;line-height:60px;font-family:"Liberation Sans";font-size:27px;color:#cccccc;font-weight:normal;letter-spacing:0.4px;'>app-routing.module.ts</div><svg class='a' style='left:271.7px;top:1726px;' width='26' height='24' viewBox='0 0 26 24'><path d='M9 3L6.4 21M17.4 3L14.8 21M3.6 8.6H22.6M2.6 15.6H21.6' stroke='#519aba' stroke-width='2.9' fill='none'/></svg><div class='t' style='left:308.7px;top:1709.0px;height:60px;line-height:60px;font-family:"Liberation Sans";font-size:27px;color:#cccccc;font-weight:normal;letter-spacing:0.4px;'>app.component.css</div><svg class='a' style='left:271.7px;top:1770px;' width='26' height='24' viewBox='0 0 26 24'><path d='M9.6 4L2.6 12L9.6 20M16.4 4L23.4 12L16.4 20' stroke='#e37933' stroke-width='2.6' fill='none'/></svg><div class='t' style='left:308.7px;top:1753.0px;height:60px;line-height:60px;font-family:"Liberation Sans";font-size:27px;color:#cccccc;font-weight:normal;letter-spacing:0.4px;'>app.component.html</div><div class='t' style='left:272.2px;top:1795px;height:60px;line-height:60px;font-size:20px;font-weight:bold;color:#e37933;letter-spacing:-0.7px;-webkit-text-stroke:0'>TS</div><div class='t' style='left:308.7px;top:1797.0px;height:60px;line-height:60px;font-family:"Liberation Sans";font-size:27px;color:#cccccc;font-weight:normal;letter-spacing:0.4px;'>app.component.spec.ts</div><div class='t' style='left:272.2px;top:1839px;height:60px;line-height:60px;font-size:20px;font-weight:bold;color:#519aba;letter-spacing:-0.7px;-webkit-text-stroke:0'>TS</div><div class='t' style='left:308.7px;top:1841.0px;height:60px;line-height:60px;font-family:"Liberation Sans";font-size:27px;color:#cccccc;font-weight:normal;letter-spacing:0.4px;'>app.component.ts</div><div class='t' style='left:272.2px;top:1883px;height:60px;line-height:60px;font-size:20px;font-weight:bold;color:#519aba;letter-spacing:-0.7px;-webkit-text-stroke:0'>TS</div><div class='t' style='left:308.7px;top:1885.0px;height:60px;line-height:60px;font-family:"Liberation Sans";font-size:27px;color:#cccccc;font-weight:normal;letter-spacing:0.4px;'>app.module.ts</div><svg class='a' style='left:264.7px;top:1947px;' width='14' height='22' viewBox='0 0 14 22'><path d='M2 1L11.5 10.5L2 20' stroke='#cccccc' stroke-width='2.0' fill='none'/></svg><div class='t' style='left:292.7px;top:1929.0px;height:60px;line-height:60px;font-family:"Liberation Sans";font-size:27px;color:#cccccc;font-weight:normal;letter-spacing:0.4px;'>environments</div></div></div><svg class='a' style='left:243.7px;top:495px;' width='22' height='16' viewBox='0 0 22 16'><path d='M1.5 2.5L10.5 11.5L19.5 2.5' stroke='#cccccc' stroke-width='2.0' fill='none'/></svg><div class='t' style='left:276.7px;top:474.0px;height:60px;line-height:60px;font-family:"Liberation Sans";font-size:27px;color:#cccccc;font-weight:normal;letter-spacing:0.4px;'>src</div><svg class='a' style='left:259.7px;top:539px;' width='22' height='16' viewBox='0 0 22 16'><path d='M1.5 2.5L10.5 11.5L19.5 2.5' stroke='#cccccc' stroke-width='2.0' fill='none'/></svg><div class='t' style='left:292.7px;top:518.0px;height:60px;line-height:60px;font-family:"Liberation Sans";font-size:27px;color:#cccccc;font-weight:normal;letter-spacing:0.4px;'>app</div><svg class='a' style='left:275.7px;top:583px;' width='22' height='16' viewBox='0 0 22 16'><path d='M1.5 2.5L10.5 11.5L19.5 2.5' stroke='#cccccc' stroke-width='2.0' fill='none'/></svg><div class='t' style='left:308.7px;top:562.0px;height:60px;line-height:60px;font-family:"Liberation Sans";font-size:27px;color:#cccccc;font-weight:normal;letter-spacing:0.4px;'>components</div><svg class='a' style='left:291.7px;top:627px;' width='22' height='16' viewBox='0 0 22 16'><path d='M1.5 2.5L10.5 11.5L19.5 2.5' stroke='#cccccc' stroke-width='2.0' fill='none'/></svg><div class='t' style='left:324.7px;top:606.0px;height:60px;line-height:60px;font-family:"Liberation Sans";font-size:27px;color:#cccccc;font-weight:normal;letter-spacing:0.4px;'>communication</div><div class='t' style='left:511px;top:606.0px;height:60px;line-height:60px;font-family:"Liberation Sans";font-size:27px;color:#6f6f6f;font-weight:normal;letter-spacing:0px;'>/</div><div class='t' style='left:524.5px;top:606.0px;height:60px;line-height:60px;font-family:"Liberation Sans";font-size:27px;color:#cccccc;font-weight:normal;letter-spacing:0.4px;'>child</div><div class='a' style='left:208px;top:657px;width:523px;height:8px;background:linear-gradient(#0000008a,#00000000)'></div><div class='a' style='left:264px;top:569px;width:2px;height:1367px;background:#585858;'></div><div class='a' style='left:208px;top:1952px;width:523px;height:2px;background:#2b2b2b;'></div><svg class='a' style='left:222px;top:1964px;' width='14' height='22' viewBox='0 0 14 22'><path d='M2 1L11.5 10.5L2 20' stroke='#cccccc' stroke-width='2.0' fill='none'/></svg><div class='t' style='left:249px;top:1946.0px;height:60px;line-height:60px;font-family:"Liberation Sans";font-size:22px;color:#cccccc;font-weight:bold;letter-spacing:0px;'>OUTLINE</div><div class='a' style='left:208px;top:1996px;width:523px;height:2px;background:#2b2b2b;'></div><svg class='a' style='left:222px;top:2008px;' width='14' height='22' viewBox='0 0 14 22'><path d='M2 1L11.5 10.5L2 20' stroke='#cccccc' stroke-width='2.0' fill='none'/></svg><div class='t' style='left:249px;top:1990.0px;height:60px;line-height:60px;font-family:"Liberation Sans";font-size:22px;color:#cccccc;font-weight:bold;letter-spacing:0px;'>TIMELINE</div><div class='a' style='left:733px;top:145px;width:2316px;height:70px;background:#181818;'></div><div class='a' style='left:733px;top:213px;width:2316px;height:2px;background:#2b2b2b;'></div><div class='a' style='left:733px;top:145px;width:391px;height:70px;background:#1f1f1f;'></div><div class='a' style='left:733px;top:145px;width:391px;height:2px;background:#0078d4;'></div><div class='a' style='left:1124px;top:145px;width:2px;height:70px;background:#2b2b2b;'></div><div class='t' style='left:761.5px;top:150px;height:60px;line-height:60px;font-size:20px;font-weight:bold;color:#519aba;letter-spacing:-0.7px;-webkit-text-stroke:0'>TS</div><div class='t' style='left:798.5px;top:152.0px;height:60px;line-height:60px;font-family:"Liberation Sans";font-size:27px;color:#ffffff;font-weight:normal;letter-spacing:0.4px;'>app-routing.module.ts</div><svg class='a' style='left:1087px;top:171.0px;' width='20' height='20' viewBox='0 0 20 20'><path d='M2.5 2.5L17.5 17.5M17.5 2.5L2.5 17.5' stroke='#ffffff' stroke-width='2.1'/></svg><svg class='a' style='left:2886px;top:168px;' width='28' height='28' viewBox='0 0 28 28'><path d='M5 3.2L24.4 14L5 24.8z' stroke='#cccccc' stroke-width='2' fill='none' stroke-linejoin='round'/></svg><svg class='a' style='left:2938px;top:166px;' width='30' height='30' viewBox='0 0 30 30'><rect x='2.5' y='2.5' width='25' height='25' rx='2.5' stroke='#cccccc' stroke-width='2' fill='none'/><path d='M15 3V27' stroke='#cccccc' stroke-width='2'/></svg><div class='a' style='left:2992px;top:179px;width:5px;height:5px;border-radius:50%;background:#cccccc'></div><div class='a' style='left:3002px;top:179px;width:5px;height:5px;border-radius:50%;background:#cccccc'></div><div class='a' style='left:3012px;top:179px;width:5px;height:5px;border-radius:50%;background:#cccccc'></div><div class='t' style='left:766px;top:210.0px;height:60px;line-height:60px;font-family:"Liberation Sans";font-size:27px;color:#a9a9a9;font-weight:normal;letter-spacing:0.4px;'>src</div><svg class='a' style='left:814px;top:229px;' width='12' height='20' viewBox='0 0 12 20'><path d='M1.8 1.5L10 10L1.8 18.5' stroke='#a9a9a9' stroke-width='2' fill='none'/></svg><div class='t' style='left:835px;top:210.0px;height:60px;line-height:60px;font-family:"Liberation Sans";font-size:27px;color:#a9a9a9;font-weight:normal;letter-spacing:0.4px;'>app</div><svg class='a' style='left:892px;top:229px;' width='12' height='20' viewBox='0 0 12 20'><path d='M1.8 1.5L10 10L1.8 18.5' stroke='#a9a9a9' stroke-width='2' fill='none'/></svg><div class='t' style='left:919.5px;top:208px;height:60px;line-height:60px;font-size:20px;font-weight:bold;color:#519aba;letter-spacing:-0.7px;-webkit-text-stroke:0'>TS</div><div class='t' style='left:957px;top:210.0px;height:60px;line-height:60px;font-family:"Liberation Sans";font-size:27px;color:#a9a9a9;font-weight:normal;letter-spacing:0.4px;'>app-routing.module.ts</div><svg class='a' style='left:1237px;top:229px;' width='12' height='20' viewBox='0 0 12 20'><path d='M1.8 1.5L10 10L1.8 18.5' stroke='#a9a9a9' stroke-width='2' fill='none'/></svg><svg class='a' style='left:1259px;top:226px;' width='32' height='26' viewBox='0 0 32 26'><path d='M4 2H1.5V24H4M28 2h2.5V24H28' stroke='#75beff' stroke-width='2.2' fill='none'/><path d='M8 10L16.5 5.5L24 9.5V16L15.5 20.5L8 16.5zM8 10L15.5 14.5L24 9.5M15.5 14.5V20.5' stroke='#75beff' stroke-width='2' fill='none' stroke-linejoin='round'/></svg><div class='t' style='left:1297px;top:210.0px;height:60px;line-height:60px;font-family:"Liberation Sans";font-size:27px;color:#a9a9a9;font-weight:normal;letter-spacing:0.4px;'>routes</div><div class='a' style='left:733px;top:259px;width:2049px;height:643px;overflow:hidden'><div class='a' style='left:-733px;top:-259px;width:3162px;height:2232px'><div class='a' style='left:869px;top:735px;width:1913px;height:36px;border-top:2px solid #2c2c2c;border-bottom:2px solid #2c2c2c'></div><div class='a' style='left:866px;top:483px;width:2px;height:419px;background:#404040;'></div><div class='a' style='left:895px;top:519px;width:2px;height:72px;background:#404040;'></div><div class='a' style='left:895px;top:663px;width:2px;height:108px;background:#707070;'></div><div class='a' style='left:895px;top:843px;width:2px;height:59px;background:#404040;'></div><div class='a' style='left:894px;top:627px;width:15px;height:36px;border:2px solid #888888;background:#0064001a'></div><div class='a' style='left:894px;top:771px;width:15px;height:36px;border:2px solid #888888;background:#0064001a'></div><div class='a mono' style='left:700px;top:233px;transform:scaleY(1.13);width:114px;text-align:right;height:36px;line-height:36px;font-size:24px;color:#6e7681'>26</div><div class='a mono nw' style='left:867px;top:233px;height:36px;line-height:36px;font-size:24px;letter-spacing:0.04px;transform:scaleY(1.13);-webkit-text-stroke:0.35px currentColor;'></div><div class='a mono' style='left:700px;top:269px;transform:scaleY(1.13);width:114px;text-align:right;height:36px;line-height:36px;font-size:24px;color:#6e7681'>27</div><div class='a mono nw' style='left:867px;top:269px;height:36px;line-height:36px;font-size:24px;letter-spacing:0.04px;transform:scaleY(1.13);-webkit-text-stroke:0.35px currentColor;'><span style='color:#6a9955'>// ];</span></div><div class='a mono' style='left:700px;top:305px;transform:scaleY(1.13);width:114px;text-align:right;height:36px;line-height:36px;font-size:24px;color:#6e7681'>28</div><div class='a mono nw' style='left:867px;top:305px;height:36px;line-height:36px;font-size:24px;letter-spacing:0.04px;transform:scaleY(1.13);-webkit-text-stroke:0.35px currentColor;'></div><div class='a mono' style='left:700px;top:341px;transform:scaleY(1.13);width:114px;text-align:right;height:36px;line-height:36px;font-size:24px;color:#6e7681'>29</div><div class='a mono nw' style='left:867px;top:341px;height:36px;line-height:36px;font-size:24px;letter-spacing:0.04px;transform:scaleY(1.13);-webkit-text-stroke:0.35px currentColor;'></div><div class='a mono' style='left:700px;top:377px;transform:scaleY(1.13);width:114px;text-align:right;height:36px;line-height:36px;font-size:24px;color:#6e7681'>30</div><div class='a mono nw' style='left:867px;top:377px;height:36px;line-height:36px;font-size:24px;letter-spacing:0.04px;transform:scaleY(1.13);-webkit-text-stroke:0.35px currentColor;'></div><div class='a mono' style='left:700px;top:413px;transform:scaleY(1.13);width:114px;text-align:right;height:36px;line-height:36px;font-size:24px;color:#6e7681'>31</div><div class='a mono nw' style='left:867px;top:413px;height:36px;line-height:36px;font-size:24px;letter-spacing:0.04px;transform:scaleY(1.13);-webkit-text-stroke:0.35px currentColor;'><span style='color:#6a9955'>// route</span></div><div class='a mono' style='left:700px;top:449px;transform:scaleY(1.13);width:114px;text-align:right;height:36px;line-height:36px;font-size:24px;color:#6e7681'>32</div><div class='a mono nw' style='left:867px;top:449px;height:36px;line-height:36px;font-size:24px;letter-spacing:0.04px;transform:scaleY(1.13);-webkit-text-stroke:0.35px currentColor;'><span style='color:#569cd6'>const</span><span style='color:#cccccc'> </span><span style='color:#4fc1ff'>routes</span><span style='color:#cccccc'>:</span><span style='color:#cccccc'> </span><span style='color:#4ec9b0'>Routes</span><span style='color:#cccccc'> </span><span style='color:#cccccc'>=</span><span style='color:#cccccc'> </span><span style='color:#ffd700'>[</span></div><div class='a mono' style='left:700px;top:485px;transform:scaleY(1.13);width:114px;text-align:right;height:36px;line-height:36px;font-size:24px;color:#6e7681'>33</div><div class='a mono nw' style='left:867px;top:485px;height:36px;line-height:36px;font-size:24px;letter-spacing:0.04px;transform:scaleY(1.13);-webkit-text-stroke:0.35px currentColor;'><span style='color:#cccccc'> </span><span style='color:#cccccc'> </span><span style='color:#da70d6'>{</span></div><div class='a mono' style='left:700px;top:521px;transform:scaleY(1.13);width:114px;text-align:right;height:36px;line-height:36px;font-size:24px;color:#6e7681'>34</div><div class='a mono nw' style='left:867px;top:521px;height:36px;line-height:36px;font-size:24px;letter-spacing:0.04px;transform:scaleY(1.13);-webkit-text-stroke:0.35px currentColor;'><span style='color:#cccccc'> </span><span style='color:#cccccc'> </span><span style='color:#cccccc'> </span><span style='color:#cccccc'> </span><span style='color:#9cdcfe'>path</span><span style='color:#cccccc'>:</span><span style='color:#cccccc'> </span><span style='color:#ce9178'>'home'</span><span style='color:#cccccc'>,</span><span style='color:#cccccc'> </span><span style='color:#6a9955'>// <svg style='display:inline-block;vertical-align:-4px' width='24' height='24' viewBox='0 0 24 24' fill='none' stroke='#6a9955' stroke-width='1.9' stroke-linecap='butt' stroke-linejoin='miter'><path d='M12 2v4M4 6h16l-2 4M6 10l12 0M12 10v12M4 15h16M8 15l-4 6M16 15l4 6'/></svg><svg style='display:inline-block;vertical-align:-4px' width='24' height='24' viewBox='0 0 24 24' fill='none' stroke='#6a9955' stroke-width='1.9' stroke-linecap='butt' stroke-linejoin='miter'><path d='M12 2v3M3 8.5V5h18v3.5M7 9v11.5h13V17M7 14.5l12-3'/></svg><svg style='display:inline-block;vertical-align:-4px' width='24' height='24' viewBox='0 0 24 24' fill='none' stroke='#6a9955' stroke-width='1.9' stroke-linecap='butt' stroke-linejoin='miter'><path d='M3 3.5l2.5 2M2 9.5l2.5 2M2.5 21l4-7M10 8h11M15.5 3v10M9 13h13M13.5 14l-3 7h11M17 17l3 3.5'/></svg></span></div><div class='a mono' style='left:700px;top:557px;transform:scaleY(1.13);width:114px;text-align:right;height:36px;line-height:36px;font-size:24px;color:#6e7681'>35</div><div class='a mono nw' style='left:867px;top:557px;height:36px;line-height:36px;font-size:24px;letter-spacing:0.04px;transform:scaleY(1.13);-webkit-text-stroke:0.35px currentColor;'><span style='color:#cccccc'> </span><span style='color:#cccccc'> </span><span style='color:#cccccc'> </span><span style='color:#cccccc'> </span><span style='color:#4ec9b0'>component</span><span style='color:#cccccc'>:</span><span style='color:#cccccc'> </span><span style='color:#4ec9b0'>HomeComponent</span><span style='color:#cccccc'>,</span></div><div class='a mono' style='left:700px;top:593px;transform:scaleY(1.13);width:114px;text-align:right;height:36px;line-height:36px;font-size:24px;color:#6e7681'>36</div><div class='a mono nw' style='left:867px;top:593px;height:36px;line-height:36px;font-size:24px;letter-spacing:0.04px;transform:scaleY(1.13);-webkit-text-stroke:0.35px currentColor;'><span style='color:#cccccc'> </span><span style='color:#cccccc'> </span><span style='color:#da70d6'>}</span><span style='color:#cccccc'>,</span></div><div class='a mono' style='left:700px;top:629px;transform:scaleY(1.13);width:114px;text-align:right;height:36px;line-height:36px;font-size:24px;color:#6e7681'>37</div><div class='a mono nw' style='left:867px;top:629px;height:36px;line-height:36px;font-size:24px;letter-spacing:0.04px;transform:scaleY(1.13);-webkit-text-stroke:0.35px currentColor;'><span style='color:#cccccc'> </span><span style='color:#cccccc'> </span><span style='color:#da70d6'>{</span></div><div class='a mono' style='left:700px;top:665px;transform:scaleY(1.13);width:114px;text-align:right;height:36px;line-height:36px;font-size:24px;color:#6e7681'>38</div><div class='a mono nw' style='left:867px;top:665px;height:36px;line-height:36px;font-size:24px;letter-spacing:0.04px;transform:scaleY(1.13);-webkit-text-stroke:0.35px currentColor;'><span style='color:#cccccc'> </span><span style='color:#cccccc'> </span><span style='color:#cccccc'> </span><span style='color:#cccccc'> </span><span style='color:#9cdcfe'>path</span><span style='color:#cccccc'>:</span><span style='color:#cccccc'> </span><span style='color:#ce9178'>'about/:name'</span><span style='color:#cccccc'>,</span><span style='color:#cccccc'> </span><span style='color:#6a9955'>// <svg style='display:inline-block;vertical-align:-4px' width='24' height='24' viewBox='0 0 24 24' fill='none' stroke='#6a9955' stroke-width='1.9' stroke-linecap='butt' stroke-linejoin='miter'><path d='M6 3h12v8H6zM6 7h12M3 13.5h18M12 13.5v8M7.5 16l-3.5 5M12 17.5h6M12 21h9'/></svg><svg style='display:inline-block;vertical-align:-4px' width='24' height='24' viewBox='0 0 24 24' fill='none' stroke='#6a9955' stroke-width='1.9' stroke-linecap='butt' stroke-linejoin='miter'><path d='M6 3h12v8H6zM6 7h12M3 13.5h18M12 13.5v8M7.5 16l-3.5 5M12 17.5h6M12 21h9'/></svg> AboutComponent</span></div><div class='a mono' style='left:700px;top:701px;transform:scaleY(1.13);width:114px;text-align:right;height:36px;line-height:36px;font-size:24px;color:#6e7681'>39</div><div class='a mono nw' style='left:867px;top:701px;height:36px;line-height:36px;font-size:24px;letter-spacing:0.04px;transform:scaleY(1.13);-webkit-text-stroke:0.35px currentColor;'><span style='color:#cccccc'> </span><span style='color:#cccccc'> </span><span style='color:#cccccc'> </span><span style='color:#cccccc'> </span><span style='color:#4ec9b0'>component</span><span style='color:#cccccc'>:</span><span style='color:#cccccc'> </span><span style='color:#4ec9b0'>AboutComponent</span><span style='color:#cccccc'>,</span></div><div class='a mono' style='left:700px;top:737px;transform:scaleY(1.13);width:114px;text-align:right;height:36px;line-height:36px;font-size:24px;color:#cccccc'>40</div><div class='a mono nw' style='left:867px;top:737px;height:36px;line-height:36px;font-size:24px;letter-spacing:0.04px;transform:scaleY(1.13);-webkit-text-stroke:0.35px currentColor;'><span style='color:#cccccc'> </span><span style='color:#cccccc'> </span><span style='color:#cccccc'> </span><span style='color:#cccccc'> </span><span style='color:#9cdcfe'>canActivate</span><span style='color:#cccccc'>:</span><span style='color:#cccccc'> </span><span style='color:#179fff'>[</span><span style='color:#4ec9b0'>AuthGardGuard</span><span style='color:#179fff'>]</span><span style='color:#cccccc'>,</span></div><div class='a mono' style='left:700px;top:773px;transform:scaleY(1.13);width:114px;text-align:right;height:36px;line-height:36px;font-size:24px;color:#6e7681'>41</div><div class='a mono nw' style='left:867px;top:773px;height:36px;line-height:36px;font-size:24px;letter-spacing:0.04px;transform:scaleY(1.13);-webkit-text-stroke:0.35px currentColor;'><span style='color:#cccccc'> </span><span style='color:#cccccc'> </span><span style='color:#da70d6'>}</span><span style='color:#cccccc'>,</span></div><div class='a mono' style='left:700px;top:809px;transform:scaleY(1.13);width:114px;text-align:right;height:36px;line-height:36px;font-size:24px;color:#6e7681'>42</div><div class='a mono nw' style='left:867px;top:809px;height:36px;line-height:36px;font-size:24px;letter-spacing:0.04px;transform:scaleY(1.13);-webkit-text-stroke:0.35px currentColor;'><span style='color:#cccccc'> </span><span style='color:#cccccc'> </span><span style='color:#da70d6'>{</span></div><div class='a mono' style='left:700px;top:845px;transform:scaleY(1.13);width:114px;text-align:right;height:36px;line-height:36px;font-size:24px;color:#6e7681'>43</div><div class='a mono nw' style='left:867px;top:845px;height:36px;line-height:36px;font-size:24px;letter-spacing:0.04px;transform:scaleY(1.13);-webkit-text-stroke:0.35px currentColor;'><span style='color:#cccccc'> </span><span style='color:#cccccc'> </span><span style='color:#cccccc'> </span><span style='color:#cccccc'> </span><span style='color:#9cdcfe'>path</span><span style='color:#cccccc'>:</span><span style='color:#cccccc'> </span><span style='color:#ce9178'>''</span><span style='color:#cccccc'>,</span></div><div class='a mono' style='left:700px;top:881px;transform:scaleY(1.13);width:114px;text-align:right;height:36px;line-height:36px;font-size:24px;color:#6e7681'>44</div><div class='a mono nw' style='left:867px;top:881px;height:36px;line-height:36px;font-size:24px;letter-spacing:0.04px;transform:scaleY(1.13);-webkit-text-stroke:0.35px currentColor;'><span style='color:#cccccc'> </span><span style='color:#cccccc'> </span><span style='color:#cccccc'> </span><span style='color:#cccccc'> </span><span style='color:#6a9955'>// <svg style='display:inline-block;vertical-align:-4px' width='24' height='24' viewBox='0 0 24 24' fill='none' stroke='#6a9955' stroke-width='1.9' stroke-linecap='butt' stroke-linejoin='miter'><path d='M12 2v4M4 6h16l-2 4M6 10l12 0M12 10v12M4 15h16M8 15l-4 6M16 15l4 6'/></svg><svg style='display:inline-block;vertical-align:-4px' width='24' height='24' viewBox='0 0 24 24' fill='none' stroke='#6a9955' stroke-width='1.9' stroke-linecap='butt' stroke-linejoin='miter'><path d='M6 3h12v8H6zM6 7h12M3 13.5h18M12 13.5v8M7.5 16l-3.5 5M12 17.5h6M12 21h9'/></svg><svg style='display:inline-block;vertical-align:-4px' width='24' height='24' viewBox='0 0 24 24' fill='none' stroke='#6a9955' stroke-width='1.9' stroke-linecap='butt' stroke-linejoin='miter'><path d='M12 2v4M4 6h16l-2 4M6 10l12 0M12 10v12M4 15h16M8 15l-4 6M16 15l4 6'/></svg></span></div><div class='a mono' style='left:700px;top:917px;transform:scaleY(1.13);width:114px;text-align:right;height:36px;line-height:36px;font-size:24px;color:#6e7681'>45</div><div class='a mono nw' style='left:867px;top:917px;height:36px;line-height:36px;font-size:24px;letter-spacing:0.04px;transform:scaleY(1.13);-webkit-text-stroke:0.35px currentColor;'><span style='color:#cccccc'> </span><span style='color:#cccccc'> </span><span style='color:#cccccc'> </span><span style='color:#cccccc'> </span><span style='color:#9cdcfe'>redirectTo</span><span style='color:#cccccc'>:</span><span style='color:#cccccc'> </span><span style='color:#ce9178'>'home'</span><span style='color:#cccccc'>,</span></div><svg class='a' style='left:873px;top:737px;' width='20' height='28' viewBox='0 0 20 28'><path d='M10 1C4.9 1 1 4.8 1 9.6c0 3 1.4 5.2 3.6 6.8V24c0 1.2.9 2 2 2h6.8c1.1 0 2-.8 2-2V16.4C17.6 14.8 19 12.6 19 9.6 19 4.8 15.1 1 10 1z' fill='#ffcc00'/><rect x='7.4' y='19' width='5.2' height='4.6' fill='#1f1f1f'/></svg></div></div><div class='a' style='left:733px;top:259px;width:2049px;height:10px;background:linear-gradient(#00000070,#00000000)'></div><div class='a' style='left:2790px;top:260px;width:232px;height:642px;overflow:hidden'><div class='a mono' style='left:0;top:0;transform:scale(0.1388888888888889,0.1111111111111111);transform-origin:0 0;font-size:24px;line-height:36px;white-space:pre;width:40000px'><div style='height:36px;font-weight:bold'><span style='color:#c586c0'>import</span><span style='color:#cccccc'> </span><span style='color:#bbbbbb'>{</span><span style='color:#cccccc'> </span><span style='color:#9cdcfe'>NgModule</span><span style='color:#cccccc'> </span><span style='color:#bbbbbb'>}</span><span style='color:#cccccc'> </span><span style='color:#c586c0'>from</span><span style='color:#cccccc'> </span><span style='color:#ce9178'>'@angular/core'</span><span style='color:#cccccc'>;</span></div><div style='height:36px;font-weight:bold'><span style='color:#c586c0'>import</span><span style='color:#cccccc'> </span><span style='color:#bbbbbb'>{</span><span style='color:#cccccc'> </span><span style='color:#9cdcfe'>RouterModule</span><span style='color:#cccccc'>,</span><span style='color:#cccccc'> </span><span style='color:#9cdcfe'>Routes</span><span style='color:#cccccc'> </span><span style='color:#bbbbbb'>}</span><span style='color:#cccccc'> </span><span style='color:#c586c0'>from</span><span style='color:#cccccc'> </span><span style='color:#ce9178'>'@angular/router'</span><span style='color:#cccccc'>;</span></div><div style='height:36px;font-weight:bold'><span style='color:#c586c0'>import</span><span style='color:#cccccc'> </span><span style='color:#bbbbbb'>{</span><span style='color:#cccccc'> </span><span style='color:#9cdcfe'>LifecycleOnDestoryComponent</span><span style='color:#cccccc'> </span><span style='color:#bbbbbb'>}</span><span style='color:#cccccc'> </span><span style='color:#c586c0'>from</span><span style='color:#cccccc'> </span><span style='color:#ce9178'>'./components/lifecycle/lifecycle-on-destory/lifecycle-on-destory.component'</span><span style='color:#cccccc'>;</span></div><div style='height:36px;font-weight:bold'><span style='color:#c586c0'>import</span><span style='color:#cccccc'> </span><span style='color:#bbbbbb'>{</span><span style='color:#cccccc'> </span><span style='color:#9cdcfe'>LifecycleOnInitComponent</span><span style='color:#cccccc'> </span><span style='color:#bbbbbb'>}</span><span style='color:#cccccc'> </span><span style='color:#c586c0'>from</span><span style='color:#cccccc'> </span><span style='color:#ce9178'>'./components/lifecycle/lifecycle-on-init/lifecycle-on-init.component'</span><span style='color:#cccccc'>;</span></div><div style='height:36px;font-weight:bold'><span style='color:#c586c0'>import</span><span style='color:#cccccc'> </span><span style='color:#bbbbbb'>{</span><span style='color:#cccccc'> </span><span style='color:#9cdcfe'>HomeComponent</span><span style='color:#cccccc'> </span><span style='color:#bbbbbb'>}</span><span style='color:#cccccc'> </span><span style='color:#c586c0'>from</span><span style='color:#cccccc'> </span><span style='color:#ce9178'>'./components/route/home/home.component'</span><span style='color:#cccccc'>;</span></div><div style='height:36px;font-weight:bold'><span style='color:#c586c0'>import</span><span style='color:#cccccc'> </span><span style='color:#bbbbbb'>{</span><span style='color:#cccccc'> </span><span style='color:#9cdcfe'>AboutComponent</span><span style='color:#cccccc'> </span><span style='color:#bbbbbb'>}</span><span style='color:#cccccc'> </span><span style='color:#c586c0'>from</span><span style='color:#cccccc'> </span><span style='color:#ce9178'>'./components/route/about/about.component'</span><span style='color:#cccccc'>;</span></div><div style='height:36px;font-weight:bold'><span style='color:#c586c0'>import</span><span style='color:#cccccc'> </span><span style='color:#bbbbbb'>{</span><span style='color:#cccccc'> </span><span style='color:#9cdcfe'>NotFoundError</span><span style='color:#cccccc'> </span><span style='color:#bbbbbb'>}</span><span style='color:#cccccc'> </span><span style='color:#c586c0'>from</span><span style='color:#cccccc'> </span><span style='color:#ce9178'>'rxjs'</span><span style='color:#cccccc'>;</span></div><div style='height:36px;font-weight:bold'><span style='color:#c586c0'>import</span><span style='color:#cccccc'> </span><span style='color:#bbbbbb'>{</span><span style='color:#cccccc'> </span><span style='color:#9cdcfe'>NotFoundComponent</span><span style='color:#cccccc'> </span><span style='color:#bbbbbb'>}</span><span style='color:#cccccc'> </span><span style='color:#c586c0'>from</span><span style='color:#cccccc'> </span><span style='color:#ce9178'>'./components/route/not-found/not-found.component'</span><span style='color:#cccccc'>;</span></div><div style='height:36px;font-weight:bold'><span style='color:#c586c0'>import</span><span style='color:#cccccc'> </span><span style='color:#bbbbbb'>{</span><span style='color:#cccccc'> </span><span style='color:#9cdcfe'>NewsComponent</span><span style='color:#cccccc'> </span><span style='color:#bbbbbb'>}</span><span style='color:#cccccc'> </span><span style='color:#c586c0'>from</span><span style='color:#cccccc'> </span><span style='color:#ce9178'>'./components/route/news/news.component'</span><span style='color:#cccccc'>;</span></div><div style='height:36px;font-weight:bold'><span style='color:#c586c0'>import</span><span style='color:#cccccc'> </span><span style='color:#bbbbbb'>{</span><span style='color:#cccccc'> </span><span style='color:#9cdcfe'>CompanyComponent</span><span style='color:#cccccc'> </span><span style='color:#bbbbbb'>}</span><span style='color:#cccccc'> </span><span style='color:#c586c0'>from</span><span style='color:#cccccc'> </span><span style='color:#ce9178'>'./components/route/company/company.component'</span><span style='color:#cccccc'>;</span></div><div style='height:36px;font-weight:bold'><span style='color:#c586c0'>import</span><span style='color:#cccccc'> </span><span style='color:#bbbbbb'>{</span><span style='color:#cccccc'> </span><span style='color:#9cdcfe'>IndustryComponent</span><span style='color:#cccccc'> </span><span style='color:#bbbbbb'>}</span><span style='color:#cccccc'> </span><span style='color:#c586c0'>from</span><span style='color:#cccccc'> </span><span style='color:#ce9178'>'./components/route/industry/industry.component'</span><span style='color:#cccccc'>;</span></div><div style='height:36px;font-weight:bold'><span style='color:#c586c0'>import</span><span style='color:#cccccc'> </span><span style='color:#bbbbbb'>{</span><span style='color:#cccccc'> </span><span style='color:#9cdcfe'>AuthGardGuard</span><span style='color:#cccccc'> </span><span style='color:#bbbbbb'>}</span><span style='color:#cccccc'> </span><span style='color:#c586c0'>from</span><span style='color:#cccccc'> </span><span style='color:#ce9178'>'./components/route/auth-gard.guard'</span><span style='color:#cccccc'>;</span></div><div style='height:36px;font-weight:bold'>&nbsp;</div><div style='height:36px;font-weight:bold'><span style='color:#6a9955'>// const routes: Routes = [</span></div><div style='height:36px;font-weight:bold'><span style='color:#6a9955'>//   //---- test for lifecycle-destroy--</span></div><div style='height:36px;font-weight:bold'><span style='color:#6a9955'>//   {</span></div><div style='height:36px;font-weight:bold'><span style='color:#6a9955'>//     path: '', // <span style='display:inline-block;width:22px;height:22px;margin-right:2px;background:#6a9955;opacity:.5;vertical-align:-3px'></span><span style='display:inline-block;width:22px;height:22px;margin-right:2px;background:#6a9955;opacity:.5;vertical-align:-3px'></span><span style='display:inline-block;width:22px;height:22px;margin-right:2px;background:#6a9955;opacity:.5;vertical-align:-3px'></span></span></div><div style='height:36px;font-weight:bold'><span style='color:#6a9955'>//     component: LifecycleOnDestoryComponent, // <span style='display:inline-block;width:22px;height:22px;margin-right:2px;background:#6a9955;opacity:.5;vertical-align:-3px'></span><span style='display:inline-block;width:22px;height:22px;margin-right:2px;background:#6a9955;opacity:.5;vertical-align:-3px'></span> HomeComponent</span></div><div style='height:36px;font-weight:bold'><span style='color:#6a9955'>//     pathMatch: 'full'</span></div><div style='height:36px;font-weight:bold'><span style='color:#6a9955'>//   },</span></div><div style='height:36px;font-weight:bold'><span style='color:#6a9955'>//   {</span></div><div style='height:36px;font-weight:bold'><span style='color:#6a9955'>//     path: 'LifecycleOnInitComponent', // <span style='display:inline-block;width:22px;height:22px;margin-right:2px;background:#6a9955;opacity:.5;vertical-align:-3px'></span><span style='display:inline-block;width:22px;height:22px;margin-right:2px;background:#6a9955;opacity:.5;vertical-align:-3px'></span> AboutComponent</span></div><div style='height:36px;font-weight:bold'><span style='color:#6a9955'>//     component: LifecycleOnInitComponent</span></div><div style='height:36px;font-weight:bold'><span style='color:#6a9955'>//   },</span></div><div style='height:36px;font-weight:bold'><span style='color:#6a9955'>//   //---- test for lifecycle-destroy--</span></div><div style='height:36px;font-weight:bold'>&nbsp;</div><div style='height:36px;font-weight:bold'><span style='color:#6a9955'>// ];</span></div><div style='height:36px;font-weight:bold'>&nbsp;</div><div style='height:36px;font-weight:bold'>&nbsp;</div><div style='height:36px;font-weight:bold'>&nbsp;</div><div style='height:36px;font-weight:bold'><span style='color:#6a9955'>// route</span></div><div style='height:36px;font-weight:bold'><span style='color:#569cd6'>const</span><span style='color:#cccccc'> </span><span style='color:#4fc1ff'>routes</span><span style='color:#cccccc'>:</span><span style='color:#cccccc'> </span><span style='color:#4ec9b0'>Routes</span><span style='color:#cccccc'> </span><span style='color:#cccccc'>=</span><span style='color:#cccccc'> </span><span style='color:#bbbbbb'>[</span></div><div style='height:36px;font-weight:bold'><span style='color:#cccccc'> </span><span style='color:#cccccc'> </span><span style='color:#bbbbbb'>{</span></div><div style='height:36px;font-weight:bold'><span style='color:#cccccc'> </span><span style='color:#cccccc'> </span><span style='color:#cccccc'> </span><span style='color:#cccccc'> </span><span style='color:#9cdcfe'>path</span><span style='color:#cccccc'>:</span><span style='color:#cccccc'> </span><span style='color:#ce9178'>'home'</span><span style='color:#cccccc'>,</span><span style='color:#cccccc'> </span><span style='color:#6a9955'>// <span style='display:inline-block;width:22px;height:22px;margin-right:2px;background:#6a9955;opacity:.5;vertical-align:-3px'></span><span style='display:inline-block;width:22px;height:22px;margin-right:2px;background:#6a9955;opacity:.5;vertical-align:-3px'></span><span style='display:inline-block;width:22px;height:22px;margin-right:2px;background:#6a9955;opacity:.5;vertical-align:-3px'></span></span></div><div style='height:36px;font-weight:bold'><span style='color:#cccccc'> </span><span style='color:#cccccc'> </span><span style='color:#cccccc'> </span><span style='color:#cccccc'> </span><span style='color:#4ec9b0'>component</span><span style='color:#cccccc'>:</span><span style='color:#cccccc'> </span><span style='color:#4ec9b0'>HomeComponent</span><span style='color:#cccccc'>,</span></div><div style='height:36px;font-weight:bold'><span style='color:#cccccc'> </span><span style='color:#cccccc'> </span><span style='color:#bbbbbb'>}</span><span style='color:#cccccc'>,</span></div><div style='height:36px;font-weight:bold'><span style='color:#cccccc'> </span><span style='color:#cccccc'> </span><span style='color:#bbbbbb'>{</span></div><div style='height:36px;font-weight:bold'><span style='color:#cccccc'> </span><span style='color:#cccccc'> </span><span style='color:#cccccc'> </span><span style='color:#cccccc'> </span><span style='color:#9cdcfe'>path</span><span style='color:#cccccc'>:</span><span style='color:#cccccc'> </span><span style='color:#ce9178'>'about/:name'</span><span style='color:#cccccc'>,</span><span style='color:#cccccc'> </span><span style='color:#6a9955'>// <span style='display:inline-block;width:22px;height:22px;margin-right:2px;background:#6a9955;opacity:.5;vertical-align:-3px'></span><span style='display:inline-block;width:22px;height:22px;margin-right:2px;background:#6a9955;opacity:.5;vertical-align:-3px'></span> AboutComponent</span></div><div style='height:36px;font-weight:bold'><span style='color:#cccccc'> </span><span style='color:#cccccc'> </span><span style='color:#cccccc'> </span><span style='color:#cccccc'> </span><span style='color:#4ec9b0'>component</span><span style='color:#cccccc'>:</span><span style='color:#cccccc'> </span><span style='color:#4ec9b0'>AboutComponent</span><span style='color:#cccccc'>,</span></div><div style='height:36px;font-weight:bold'><span style='color:#cccccc'> </span><span style='color:#cccccc'> </span><span style='color:#cccccc'> </span><span style='color:#cccccc'> </span><span style='color:#9cdcfe'>canActivate</span><span style='color:#cccccc'>:</span><span style='color:#cccccc'> </span><span style='color:#bbbbbb'>[</span><span style='color:#4ec9b0'>AuthGardGuard</span><span style='color:#bbbbbb'>]</span><span style='color:#cccccc'>,</span></div><div style='height:36px;font-weight:bold'><span style='color:#cccccc'> </span><span style='color:#cccccc'> </span><span style='color:#bbbbbb'>}</span><span style='color:#cccccc'>,</span></div><div style='height:36px;font-weight:bold'><span style='color:#cccccc'> </span><span style='color:#cccccc'> </span><span style='color:#bbbbbb'>{</span></div><div style='height:36px;font-weight:bold'><span style='color:#cccccc'> </span><span style='color:#cccccc'> </span><span style='color:#cccccc'> </span><span style='color:#cccccc'> </span><span style='color:#9cdcfe'>path</span><span style='color:#cccccc'>:</span><span style='color:#cccccc'> </span><span style='color:#ce9178'>''</span><span style='color:#cccccc'>,</span></div><div style='height:36px;font-weight:bold'><span style='color:#cccccc'> </span><span style='color:#cccccc'> </span><span style='color:#cccccc'> </span><span style='color:#cccccc'> </span><span style='color:#6a9955'>// <span style='display:inline-block;width:22px;height:22px;margin-right:2px;background:#6a9955;opacity:.5;vertical-align:-3px'></span><span style='display:inline-block;width:22px;height:22px;margin-right:2px;background:#6a9955;opacity:.5;vertical-align:-3px'></span><span style='display:inline-block;width:22px;height:22px;margin-right:2px;background:#6a9955;opacity:.5;vertical-align:-3px'></span></span></div><div style='height:36px;font-weight:bold'><span style='color:#cccccc'> </span><span style='color:#cccccc'> </span><span style='color:#cccccc'> </span><span style='color:#cccccc'> </span><span style='color:#9cdcfe'>redirectTo</span><span style='color:#cccccc'>:</span><span style='color:#cccccc'> </span><span style='color:#ce9178'>'home'</span><span style='color:#cccccc'>,</span></div><div style='height:36px;font-weight:bold'><span style='color:#cccccc'> </span><span style='color:#cccccc'> </span><span style='color:#cccccc'> </span><span style='color:#cccccc'> </span><span style='color:#6a9955'>// <span style='display:inline-block;width:22px;height:22px;margin-right:2px;background:#6a9955;opacity:.5;vertical-align:-3px'></span><span style='display:inline-block;width:22px;height:22px;margin-right:2px;background:#6a9955;opacity:.5;vertical-align:-3px'></span><span style='display:inline-block;width:22px;height:22px;margin-right:2px;background:#6a9955;opacity:.5;vertical-align:-3px'></span><span style='display:inline-block;width:22px;height:22px;margin-right:2px;background:#6a9955;opacity:.5;vertical-align:-3px'></span></span></div><div style='height:36px;font-weight:bold'><span style='color:#cccccc'> </span><span style='color:#cccccc'> </span><span style='color:#cccccc'> </span><span style='color:#cccccc'> </span><span style='color:#9cdcfe'>pathMatch</span><span style='color:#cccccc'>:</span><span style='color:#cccccc'> </span><span style='color:#ce9178'>'full'</span></div><div style='height:36px;font-weight:bold'><span style='color:#cccccc'> </span><span style='color:#cccccc'> </span><span style='color:#cccccc'> </span><span style='color:#cccccc'> </span><span style='color:#6a9955'>// full<span style='display:inline-block;width:22px;height:22px;margin-right:2px;background:#6a9955;opacity:.5;vertical-align:-3px'></span><span style='display:inline-block;width:22px;height:22px;margin-right:2px;background:#6a9955;opacity:.5;vertical-align:-3px'></span><span style='display:inline-block;width:22px;height:22px;margin-right:2px;background:#6a9955;opacity:.5;vertical-align:-3px'></span><span style='display:inline-block;width:22px;height:22px;margin-right:2px;background:#6a9955;opacity:.5;vertical-align:-3px'></span><span style='display:inline-block;width:22px;height:22px;margin-right:2px;background:#6a9955;opacity:.5;vertical-align:-3px'></span><span style='display:inline-block;width:22px;height:22px;margin-right:2px;background:#6a9955;opacity:.5;vertical-align:-3px'></span><span style='display:inline-block;width:22px;height:22px;margin-right:2px;background:#6a9955;opacity:.5;vertical-align:-3px'></span>; prefix<span style='display:inline-block;width:22px;height:22px;margin-right:2px;background:#6a9955;opacity:.5;vertical-align:-3px'></span><span style='display:inline-block;width:22px;height:22px;margin-right:2px;background:#6a9955;opacity:.5;vertical-align:-3px'></span><span style='display:inline-block;width:22px;height:22px;margin-right:2px;background:#6a9955;opacity:.5;vertical-align:-3px'></span><span style='display:inline-block;width:22px;height:22px;margin-right:2px;background:#6a9955;opacity:.5;vertical-align:-3px'></span><span style='display:inline-block;width:22px;height:22px;margin-right:2px;background:#6a9955;opacity:.5;vertical-align:-3px'></span><span style='display:inline-block;width:22px;height:22px;margin-right:2px;background:#6a9955;opacity:.5;vertical-align:-3px'></span><span style='display:inline-block;width:22px;height:22px;margin-right:2px;background:#6a9955;opacity:.5;vertical-align:-3px'></span><span style='display:inline-block;width:22px;height:22px;margin-right:2px;background:#6a9955;opacity:.5;vertical-align:-3px'></span><span style='display:inline-block;width:22px;height:22px;margin-right:2px;background:#6a9955;opacity:.5;vertical-align:-3px'></span>prefix</span></div><div style='height:36px;font-weight:bold'><span style='color:#cccccc'> </span><span style='color:#cccccc'> </span><span style='color:#bbbbbb'>}</span><span style='color:#cccccc'>,</span></div><div style='height:36px;font-weight:bold'><span style='color:#cccccc'> </span><span style='color:#cccccc'> </span><span style='color:#bbbbbb'>{</span></div><div style='height:36px;font-weight:bold'><span style='color:#cccccc'> </span><span style='color:#cccccc'> </span><span style='color:#cccccc'> </span><span style='color:#cccccc'> </span><span style='color:#9cdcfe'>path</span><span style='color:#cccccc'>:</span><span style='color:#cccccc'> </span><span style='color:#ce9178'>'news'</span><span style='color:#cccccc'>,</span></div><div style='height:36px;font-weight:bold'><span style='color:#cccccc'> </span><span style='color:#cccccc'> </span><span style='color:#cccccc'> </span><span style='color:#cccccc'> </span><span style='color:#4ec9b0'>component</span><span style='color:#cccccc'>:</span><span style='color:#cccccc'> </span><span style='color:#4ec9b0'>NewsComponent</span><span style='color:#cccccc'>,</span></div><div style='height:36px;font-weight:bold'><span style='color:#cccccc'> </span><span style='color:#cccccc'> </span><span style='color:#cccccc'> </span><span style='color:#cccccc'> </span><span style='color:#9cdcfe'>children</span><span style='color:#cccccc'>:</span><span style='color:#cccccc'> </span><span style='color:#bbbbbb'>[</span></div><div style='height:36px;font-weight:bold'><span style='color:#cccccc'> </span><span style='color:#cccccc'> </span><span style='color:#cccccc'> </span><span style='color:#cccccc'> </span><span style='color:#cccccc'> </span><span style='color:#cccccc'> </span><span style='color:#bbbbbb'>{</span></div><div style='height:36px;font-weight:bold'><span style='color:#cccccc'> </span><span style='color:#cccccc'> </span><span style='color:#cccccc'> </span><span style='color:#cccccc'> </span><span style='color:#cccccc'> </span><span style='color:#cccccc'> </span><span style='color:#cccccc'> </span><span style='color:#cccccc'> </span><span style='color:#9cdcfe'>path</span><span style='color:#cccccc'>:</span><span style='color:#cccccc'> </span><span style='color:#ce9178'>'company'</span><span style='color:#cccccc'>,</span></div><div style='height:36px;font-weight:bold'><span style='color:#cccccc'> </span><span style='color:#cccccc'> </span><span style='color:#cccccc'> </span><span style='color:#cccccc'> </span><span style='color:#cccccc'> </span><span style='color:#cccccc'> </span><span style='color:#cccccc'> </span><span style='color:#cccccc'> </span><span style='color:#4ec9b0'>component</span><span style='color:#cccccc'>:</span><span style='color:#cccccc'> </span><span style='color:#4ec9b0'>CompanyComponent</span><span style='color:#cccccc'>,</span></div><div style='height:36px;font-weight:bold'><span style='color:#cccccc'> </span><span style='color:#cccccc'> </span><span style='color:#cccccc'> </span><span style='color:#cccccc'> </span><span style='color:#cccccc'> </span><span style='color:#cccccc'> </span><span style='color:#cccccc'> </span><span style='color:#cccccc'> </span><span style='color:#9cdcfe'>outlet</span><span style='color:#cccccc'>:</span><span style='color:#cccccc'> </span><span style='color:#ce9178'>'left'</span></div><div style='height:36px;font-weight:bold'><span style='color:#cccccc'> </span><span style='color:#cccccc'> </span><span style='color:#cccccc'> </span><span style='color:#cccccc'> </span><span style='color:#cccccc'> </span><span style='color:#cccccc'> </span><span style='color:#bbbbbb'>}</span><span style='color:#cccccc'>,</span></div><div style='height:36px;font-weight:bold'><span style='color:#cccccc'> </span><span style='color:#cccccc'> </span><span style='color:#cccccc'> </span><span style='color:#cccccc'> </span><span style='color:#cccccc'> </span><span style='color:#cccccc'> </span><span style='color:#bbbbbb'>{</span></div><div style='height:36px;font-weight:bold'><span style='color:#cccccc'> </span><span style='color:#cccccc'> </span><span style='color:#cccccc'> </span><span style='color:#cccccc'> </span><span style='color:#cccccc'> </span><span style='color:#cccccc'> </span><span style='color:#cccccc'> </span><span style='color:#cccccc'> </span><span style='color:#9cdcfe'>path</span><span style='color:#cccccc'>:</span><span style='color:#cccccc'> </span><span style='color:#ce9178'>'industry'</span><span style='color:#cccccc'>,</span></div><div style='height:36px;font-weight:bold'><span style='color:#cccccc'> </span><span style='color:#cccccc'> </span><span style='color:#cccccc'> </span><span style='color:#cccccc'> </span><span style='color:#cccccc'> </span><span style='color:#cccccc'> </span><span style='color:#cccccc'> </span><span style='color:#cccccc'> </span><span style='color:#4ec9b0'>component</span><span style='color:#cccccc'>:</span><span style='color:#cccccc'> </span><span style='color:#4ec9b0'>IndustryComponent</span><span style='color:#cccccc'>,</span></div><div style='height:36px;font-weight:bold'><span style='color:#cccccc'> </span><span style='color:#cccccc'> </span><span style='color:#cccccc'> </span><span style='color:#cccccc'> </span><span style='color:#cccccc'> </span><span style='color:#cccccc'> </span><span style='color:#cccccc'> </span><span style='color:#cccccc'> </span><span style='color:#9cdcfe'>outlet</span><span style='color:#cccccc'>:</span><span style='color:#cccccc'> </span><span style='color:#ce9178'>'right'</span></div><div style='height:36px;font-weight:bold'><span style='color:#cccccc'> </span><span style='color:#cccccc'> </span><span style='color:#cccccc'> </span><span style='color:#cccccc'> </span><span style='color:#cccccc'> </span><span style='color:#cccccc'> </span><span style='color:#bbbbbb'>}</span></div><div style='height:36px;font-weight:bold'><span style='color:#cccccc'> </span><span style='color:#cccccc'> </span><span style='color:#cccccc'> </span><span style='color:#cccccc'> </span><span style='color:#bbbbbb'>]</span></div><div style='height:36px;font-weight:bold'><span style='color:#cccccc'> </span><span style='color:#cccccc'> </span><span style='color:#bbbbbb'>}</span><span style='color:#cccccc'>,</span></div><div style='height:36px;font-weight:bold'><span style='color:#cccccc'> </span><span style='color:#cccccc'> </span><span style='color:#bbbbbb'>{</span></div><div style='height:36px;font-weight:bold'><span style='color:#cccccc'> </span><span style='color:#cccccc'> </span><span style='color:#cccccc'> </span><span style='color:#cccccc'> </span><span style='color:#9cdcfe'>path</span><span style='color:#cccccc'>:</span><span style='color:#cccccc'> </span><span style='color:#ce9178'>'user'</span><span style='color:#cccccc'>,</span></div><div style='height:36px;font-weight:bold'><span style='color:#cccccc'> </span><span style='color:#cccccc'> </span><span style='color:#cccccc'> </span><span style='color:#cccccc'> </span><span style='color:#dcdcaa'>loadChildren</span><span style='color:#cccccc'>:</span><span style='color:#cccccc'> </span><span style='color:#bbbbbb'>(</span><span style='color:#bbbbbb'>)</span><span style='color:#cccccc'> </span><span style='color:#569cd6'>=&gt;</span><span style='color:#cccccc'> </span><span style='color:#c586c0'>import</span><span style='color:#bbbbbb'>(</span><span style='color:#ce9178'>'./components/route/user/user.module'</span><span style='color:#bbbbbb'>)</span><span style='color:#cccccc'>.</span><span style='color:#dcdcaa'>then</span><span style='color:#bbbbbb'>(</span><span style='color:#9cdcfe'>m</span><span style='color:#cccccc'> </span><span style='color:#569cd6'>=&gt;</span><span style='color:#cccccc'> </span><span style='color:#bbbbbb'>{</span></div><div style='height:36px;font-weight:bold'><span style='color:#cccccc'> </span><span style='color:#cccccc'> </span><span style='color:#cccccc'> </span><span style='color:#cccccc'> </span><span style='color:#cccccc'> </span><span style='color:#cccccc'> </span><span style='color:#9cdcfe'>console</span><span style='color:#cccccc'>.</span><span style='color:#dcdcaa'>log</span><span style='color:#bbbbbb'>(</span><span style='color:#9cdcfe'>m</span><span style='color:#bbbbbb'>)</span><span style='color:#cccccc'>;</span></div><div style='height:36px;font-weight:bold'><span style='color:#cccccc'> </span><span style='color:#cccccc'> </span><span style='color:#cccccc'> </span><span style='color:#cccccc'> </span><span style='color:#cccccc'> </span><span style='color:#cccccc'> </span><span style='color:#c586c0'>return</span><span style='color:#cccccc'> </span><span style='color:#9cdcfe'>m</span><span style='color:#cccccc'>.</span><span style='color:#4ec9b0'>UserModule</span></div><div style='height:36px;font-weight:bold'><span style='color:#cccccc'> </span><span style='color:#cccccc'> </span><span style='color:#cccccc'> </span><span style='color:#cccccc'> </span><span style='color:#bbbbbb'>}</span><span style='color:#bbbbbb'>)</span></div><div style='height:36px;font-weight:bold'><span style='color:#cccccc'> </span><span style='color:#cccccc'> </span><span style='color:#bbbbbb'>}</span><span style='color:#cccccc'>,</span></div><div style='height:36px;font-weight:bold'><span style='color:#cccccc'> </span><span style='color:#cccccc'> </span><span style='color:#bbbbbb'>{</span></div><div style='height:36px;font-weight:bold'><span style='color:#cccccc'> </span><span style='color:#cccccc'> </span><span style='color:#cccccc'> </span><span style='color:#cccccc'> </span><span style='color:#9cdcfe'>path</span><span style='color:#cccccc'>:</span><span style='color:#cccccc'> </span><span style='color:#ce9178'>'**'</span><span style='color:#cccccc'>,</span></div><div style='height:36px;font-weight:bold'><span style='color:#cccccc'> </span><span style='color:#cccccc'> </span><span style='color:#cccccc'> </span><span style='color:#cccccc'> </span><span style='color:#4ec9b0'>component</span><span style='color:#cccccc'>:</span><span style='color:#cccccc'> </span><span style='color:#4ec9b0'>NotFoundComponent</span></div><div style='height:36px;font-weight:bold'><span style='color:#cccccc'> </span><span style='color:#cccccc'> </span><span style='color:#bbbbbb'>}</span><span style='color:#cccccc'>,</span></div><div style='height:36px;font-weight:bold'><span style='color:#cccccc'> </span><span style='color:#cccccc'> </span><span style='color:#6a9955'>// order is important</span></div><div style='height:36px;font-weight:bold'><span style='color:#bbbbbb'>]</span><span style='color:#cccccc'>;</span></div><div style='height:36px;font-weight:bold'>&nbsp;</div><div style='height:36px;font-weight:bold'><span style='color:#cccccc'>@</span><span style='color:#4ec9b0'>NgModule</span><span style='color:#bbbbbb'>(</span><span style='color:#bbbbbb'>{</span></div><div style='height:36px;font-weight:bold'><span style='color:#cccccc'> </span><span style='color:#cccccc'> </span><span style='color:#6a9955'>// imports: [RouterModule.forRoot(routes, { useHash: true })],</span></div><div style='height:36px;font-weight:bold'><span style='color:#cccccc'> </span><span style='color:#cccccc'> </span><span style='color:#9cdcfe'>imports</span><span style='color:#cccccc'>:</span><span style='color:#cccccc'> </span><span style='color:#bbbbbb'>[</span><span style='color:#4ec9b0'>RouterModule</span><span style='color:#cccccc'>.</span><span style='color:#dcdcaa'>forRoot</span><span style='color:#bbbbbb'>(</span><span style='color:#4fc1ff'>routes</span><span style='color:#bbbbbb'>)</span><span style='color:#bbbbbb'>]</span><span style='color:#cccccc'>,</span></div><div style='height:36px;font-weight:bold'><span style='color:#cccccc'> </span><span style='color:#cccccc'> </span><span style='color:#9cdcfe'>exports</span><span style='color:#cccccc'>:</span><span style='color:#cccccc'> </span><span style='color:#bbbbbb'>[</span><span style='color:#4ec9b0'>RouterModule</span><span style='color:#bbbbbb'>]</span></div><div style='height:36px;font-weight:bold'><span style='color:#bbbbbb'>}</span><span style='color:#bbbbbb'>)</span></div><div style='height:36px;font-weight:bold'><span style='color:#c586c0'>export</span><span style='color:#cccccc'> </span><span style='color:#569cd6'>class</span><span style='color:#cccccc'> </span><span style='color:#4ec9b0'>AppRoutingModule</span><span style='color:#cccccc'> </span><span style='color:#bbbbbb'>{</span><span style='color:#cccccc'> </span><span style='color:#bbbbbb'>}</span></div></div></div><div class='a' style='left:3022px;top:259px;width:2px;height:643px;background:#2a2a2a;'></div><div class='a' style='left:3024px;top:502px;width:25px;height:3px;background:#6e6e6e;'></div><div class='a' style='left:733px;top:901px;width:2316px;height:2px;background:#2b2b2b;'></div><div class='a' style='left:733px;top:903px;width:2316px;height:69px;background:#181818;'></div><div class='a' style='left:733px;top:970px;width:2316px;height:2px;background:#2b2b2b;'></div><div class='a' style='left:733px;top:903px;width:349px;height:69px;background:#1f1f1f;'></div><div class='a' style='left:1082px;top:903px;width:2px;height:69px;background:#2b2b2b;'></div><div class='t' style='left:761.5px;top:906px;height:60px;line-height:60px;font-size:20px;font-weight:bold;color:#519aba;letter-spacing:-0.7px;-webkit-text-stroke:0'>TS</div><div class='t' style='left:799px;top:908.0px;height:60px;line-height:60px;font-family:"Liberation Sans";font-size:27px;color:#8f8f8f;font-weight:normal;letter-spacing:0.4px;'>auth-gard.guard.ts</div><svg class='a' style='left:1043px;top:927.0px;' width='20' height='20' viewBox='0 0 20 20'><path d='M2.5 2.5L17.5 17.5M17.5 2.5L2.5 17.5' stroke='#8f8f8f' stroke-width='2.1'/></svg><div class='a' style='left:2992px;top:935px;width:5px;height:5px;border-radius:50%;background:#cccccc'></div><div class='a' style='left:3002px;top:935px;width:5px;height:5px;border-radius:50%;background:#cccccc'></div><div class='a' style='left:3012px;top:935px;width:5px;height:5px;border-radius:50%;background:#cccccc'></div><div class='t' style='left:766px;top:966.0px;height:60px;line-height:60px;font-family:"Liberation Sans";font-size:27px;color:#a9a9a9;font-weight:normal;letter-spacing:0.4px;'>src</div><svg class='a' style='left:814px;top:985px;' width='12' height='20' viewBox='0 0 12 20'><path d='M1.8 1.5L10 10L1.8 18.5' stroke='#a9a9a9' stroke-width='2' fill='none'/></svg><div class='t' style='left:835.5px;top:966.0px;height:60px;line-height:60px;font-family:"Liberation Sans";font-size:27px;color:#a9a9a9;font-weight:normal;letter-spacing:0.4px;'>app</div><svg class='a' style='left:893px;top:985px;' width='12' height='20' viewBox='0 0 12 20'><path d='M1.8 1.5L10 10L1.8 18.5' stroke='#a9a9a9' stroke-width='2' fill='none'/></svg><div class='t' style='left:913px;top:966.0px;height:60px;line-height:60px;font-family:"Liberation Sans";font-size:27px;color:#a9a9a9;font-weight:normal;letter-spacing:0.4px;'>components</div><svg class='a' style='left:1074px;top:985px;' width='12' height='20' viewBox='0 0 12 20'><path d='M1.8 1.5L10 10L1.8 18.5' stroke='#a9a9a9' stroke-width='2' fill='none'/></svg><div class='t' style='left:1095.5px;top:966.0px;height:60px;line-height:60px;font-family:"Liberation Sans";font-size:27px;color:#a9a9a9;font-weight:normal;letter-spacing:0.4px;'>route</div><svg class='a' style='left:1170px;top:985px;' width='12' height='20' viewBox='0 0 12 20'><path d='M1.8 1.5L10 10L1.8 18.5' stroke='#a9a9a9' stroke-width='2' fill='none'/></svg><div class='t' style='left:1197.0px;top:964px;height:60px;line-height:60px;font-size:20px;font-weight:bold;color:#519aba;letter-spacing:-0.7px;-webkit-text-stroke:0'>TS</div><div class='t' style='left:1234.5px;top:966.0px;height:60px;line-height:60px;font-family:"Liberation Sans";font-size:27px;color:#a9a9a9;font-weight:normal;letter-spacing:0.4px;'>auth-gard.guard.ts</div><svg class='a' style='left:1474px;top:985px;' width='12' height='20' viewBox='0 0 12 20'><path d='M1.8 1.5L10 10L1.8 18.5' stroke='#a9a9a9' stroke-width='2' fill='none'/></svg><div class='t' style='left:1494px;top:966.0px;height:60px;line-height:60px;font-family:"Liberation Sans";font-size:27px;color:#a9a9a9;font-weight:normal;letter-spacing:0px;'>...</div><div class='a' style='left:733px;top:1016px;width:2049px;height:644px;overflow:hidden'><div class='a' style='left:-733px;top:-1016px;width:3162px;height:2232px'><div class='a' style='left:867px;top:1592px;width:1915px;height:36px;border:2px solid #2c2c2c;border-right:none'></div><div class='a' style='left:866px;top:1196px;width:2px;height:36px;background:#404040;'></div><div class='a' style='left:866px;top:1304px;width:2px;height:252px;background:#404040;'></div><div class='a' style='left:895px;top:1376px;width:2px;height:108px;background:#404040;'></div><div class='a mono' style='left:700px;top:1018px;transform:scaleY(1.13);width:114px;text-align:right;height:36px;line-height:36px;font-size:24px;color:#6e7681'>1</div><div class='a mono nw' style='left:867px;top:1018px;height:36px;line-height:36px;font-size:24px;letter-spacing:0.04px;transform:scaleY(1.13);-webkit-text-stroke:0.35px currentColor;'><span style='color:#c586c0'>import</span><span style='color:#cccccc'> </span><span style='color:#ffd700'>{</span><span style='color:#cccccc'> </span><span style='color:#9cdcfe'>Injectable</span><span style='color:#cccccc'> </span><span style='color:#ffd700'>}</span><span style='color:#cccccc'> </span><span style='color:#c586c0'>from</span><span style='color:#cccccc'> </span><span style='color:#ce9178'>'@angular/core'</span><span style='color:#cccccc'>;</span></div><div class='a mono' style='left:700px;top:1054px;transform:scaleY(1.13);width:114px;text-align:right;height:36px;line-height:36px;font-size:24px;color:#6e7681'>2</div><div class='a mono nw' style='left:867px;top:1054px;height:36px;line-height:36px;font-size:24px;letter-spacing:0.04px;transform:scaleY(1.13);-webkit-text-stroke:0.35px currentColor;'><span style='color:#c586c0'>import</span><span style='color:#cccccc'> </span><span style='color:#ffd700'>{</span><span style='color:#cccccc'> </span><span style='color:#9cdcfe'>ActivatedRouteSnapshot</span><span style='color:#cccccc'>,</span><span style='color:#cccccc'> </span><span style='color:#9cdcfe'>CanActivate</span><span style='color:#cccccc'>,</span><span style='color:#cccccc'> </span><span style='color:#9cdcfe'>RouterStateSnapshot</span><span style='color:#cccccc'>,</span><span style='color:#cccccc'> </span><span style='color:#9cdcfe'>UrlTree</span><span style='color:#cccccc'> </span><span style='color:#ffd700'>}</span><span style='color:#cccccc'> </span><span style='color:#c586c0'>from</span><span style='color:#cccccc'> </span><span style='color:#ce9178'>'@angular/router'</span><span style='color:#cccccc'>;</span></div><div class='a mono' style='left:700px;top:1090px;transform:scaleY(1.13);width:114px;text-align:right;height:36px;line-height:36px;font-size:24px;color:#6e7681'>3</div><div class='a mono nw' style='left:867px;top:1090px;height:36px;line-height:36px;font-size:24px;letter-spacing:0.04px;transform:scaleY(1.13);-webkit-text-stroke:0.35px currentColor;'><span style='color:#c586c0'>import</span><span style='color:#cccccc'> </span><span style='color:#ffd700'>{</span><span style='color:#cccccc'> </span><span style='color:#9cdcfe'>Observable</span><span style='color:#cccccc'> </span><span style='color:#ffd700'>}</span><span style='color:#cccccc'> </span><span style='color:#c586c0'>from</span><span style='color:#cccccc'> </span><span style='color:#ce9178'>'rxjs'</span><span style='color:#cccccc'>;</span></div><div class='a mono' style='left:700px;top:1126px;transform:scaleY(1.13);width:114px;text-align:right;height:36px;line-height:36px;font-size:24px;color:#6e7681'>4</div><div class='a mono nw' style='left:867px;top:1126px;height:36px;line-height:36px;font-size:24px;letter-spacing:0.04px;transform:scaleY(1.13);-webkit-text-stroke:0.35px currentColor;'></div><div class='a mono' style='left:700px;top:1162px;transform:scaleY(1.13);width:114px;text-align:right;height:36px;line-height:36px;font-size:24px;color:#6e7681'>5</div><div class='a mono nw' style='left:867px;top:1162px;height:36px;line-height:36px;font-size:24px;letter-spacing:0.04px;transform:scaleY(1.13);-webkit-text-stroke:0.35px currentColor;'><span style='color:#cccccc'>@</span><span style='color:#4ec9b0'>Injectable</span><span style='color:#ffd700'>(</span><span style='color:#da70d6'>{</span></div><div class='a mono' style='left:700px;top:1198px;transform:scaleY(1.13);width:114px;text-align:right;height:36px;line-height:36px;font-size:24px;color:#6e7681'>6</div><div class='a mono nw' style='left:867px;top:1198px;height:36px;line-height:36px;font-size:24px;letter-spacing:0.04px;transform:scaleY(1.13);-webkit-text-stroke:0.35px currentColor;'><span style='color:#cccccc'> </span><span style='color:#cccccc'> </span><span style='color:#9cdcfe'>providedIn</span><span style='color:#cccccc'>:</span><span style='color:#cccccc'> </span><span style='color:#ce9178'>'root'</span></div><div class='a mono' style='left:700px;top:1234px;transform:scaleY(1.13);width:114px;text-align:right;height:36px;line-height:36px;font-size:24px;color:#6e7681'>7</div><div class='a mono nw' style='left:867px;top:1234px;height:36px;line-height:36px;font-size:24px;letter-spacing:0.04px;transform:scaleY(1.13);-webkit-text-stroke:0.35px currentColor;'><span style='color:#da70d6'>}</span><span style='color:#ffd700'>)</span></div><div class='a mono' style='left:700px;top:1270px;transform:scaleY(1.13);width:114px;text-align:right;height:36px;line-height:36px;font-size:24px;color:#6e7681'>8</div><div class='a mono nw' style='left:867px;top:1270px;height:36px;line-height:36px;font-size:24px;letter-spacing:0.04px;transform:scaleY(1.13);-webkit-text-stroke:0.35px currentColor;'><span style='color:#c586c0'>export</span><span style='color:#cccccc'> </span><span style='color:#569cd6'>class</span><span style='color:#cccccc'> </span><span style='color:#4ec9b0'>AuthGardGuard</span><span style='color:#cccccc'> </span><span style='color:#569cd6'>implements</span><span style='color:#cccccc'> </span><span style='color:#4ec9b0'>CanActivate</span><span style='color:#cccccc'> </span><span style='color:#ffd700'>{</span><span style='color:#cccccc'> </span><span style='color:#6a9955'>// <svg style='display:inline-block;vertical-align:-4px' width='24' height='24' viewBox='0 0 24 24' fill='none' stroke='#6a9955' stroke-width='1.9' stroke-linecap='butt' stroke-linejoin='miter'><path d='M2 8h6M5 3v17l-2 1.5M2 15l6-3M14.5 2v3M10 5.5h11M12 6l1.5 3.5M18.5 6l-1.5 3.5M9 10.5h13M15 11l-3 10M10 15h12M12 17l8 5'/></svg><svg style='display:inline-block;vertical-align:-4px' width='24' height='24' viewBox='0 0 24 24' fill='none' stroke='#6a9955' stroke-width='1.9' stroke-linecap='butt' stroke-linejoin='miter'><path d='M2 7h20M10 2.5L4.5 21.5M9.5 11.5h10.5v10M9.5 15h10.5M9.5 18.5h10.5'/></svg>CanActivate<svg style='display:inline-block;vertical-align:-4px' width='24' height='24' viewBox='0 0 24 24' fill='none' stroke='#6a9955' stroke-width='1.9' stroke-linecap='butt' stroke-linejoin='miter'><path d='M12 2v3M3 8.5V5h18v3.5M7 9v11.5h13V17M7 14.5l12-3'/></svg><svg style='display:inline-block;vertical-align:-4px' width='24' height='24' viewBox='0 0 24 24' fill='none' stroke='#6a9955' stroke-width='1.9' stroke-linecap='butt' stroke-linejoin='miter'><path d='M3 5l2.5 2.5M2 11h4v7l-3 3M5 20.5c4 .8 10 .8 17 .5M9 6h12M15 2.5v3.5M10 11h10M12 11l7 8M19 11l-8 9'/></svg><svg style='display:inline-block;vertical-align:-4px' width='24' height='24' viewBox='0 0 24 24' fill='none' stroke='#6a9955' stroke-width='1.9' stroke-linecap='butt' stroke-linejoin='miter'><path d='M2 7h20M10 2.5L4.5 21.5M9.5 11.5h10.5v10M9.5 15h10.5M9.5 18.5h10.5'/></svg><svg style='display:inline-block;vertical-align:-4px' width='24' height='24' viewBox='0 0 24 24' fill='none' stroke='#6a9955' stroke-width='1.9' stroke-linecap='butt' stroke-linejoin='miter'><path d='M2 8h6M5 3v17l-2 1.5M2 15l6-3M14.5 2v3M10 5.5h11M12 6l1.5 3.5M18.5 6l-1.5 3.5M9 10.5h13M15 11l-3 10M10 15h12M12 17l8 5'/></svg><svg style='display:inline-block;vertical-align:-4px' width='24' height='24' viewBox='0 0 24 24' fill='none' stroke='#6a9955' stroke-width='1.9' stroke-linecap='butt' stroke-linejoin='miter'><path d='M12 2L2 11M12 2l10 9M12 8v14'/></svg><svg style='display:inline-block;vertical-align:-4px' width='24' height='24' viewBox='0 0 24 24'><path d='M5 18.5c1.2 0 2 .8 2 1.8 0 1.4-1 2.6-2.4 3' stroke='#6a9955' stroke-width='2' fill='none'/></svg><svg style='display:inline-block;vertical-align:-4px' width='24' height='24' viewBox='0 0 24 24' fill='none' stroke='#6a9955' stroke-width='1.9' stroke-linecap='butt' stroke-linejoin='miter'><path d='M3 3h18v18H3zM7 7h10v10H7zM10 10.5h4v3h-4z'/></svg><svg style='display:inline-block;vertical-align:-4px' width='24' height='24' viewBox='0 0 24 24' fill='none' stroke='#6a9955' stroke-width='1.9' stroke-linecap='butt' stroke-linejoin='miter'><path d='M12 2v4M3 6h18M9 6c0 8-2 12-6 16M9 11.5h9c0 7-1 10-4 10'/></svg><svg style='display:inline-block;vertical-align:-4px' width='24' height='24' viewBox='0 0 24 24' fill='none' stroke='#6a9955' stroke-width='1.9' stroke-linecap='butt' stroke-linejoin='miter'><path d='M3 5l2.5 2.5M2 11h4v7l-3 3M5 20.5c4 .8 10 .8 17 .5M9 6h12M15 2.5v3.5M10 11h10M12 11l7 8M19 11l-8 9'/></svg><svg style='display:inline-block;vertical-align:-4px' width='24' height='24' viewBox='0 0 24 24' fill='none' stroke='#6a9955' stroke-width='1.9' stroke-linecap='butt' stroke-linejoin='miter'><path d='M2 7h20M10 2.5L4.5 21.5M9.5 11.5h10.5v10M9.5 15h10.5M9.5 18.5h10.5'/></svg><svg style='display:inline-block;vertical-align:-4px' width='24' height='24' viewBox='0 0 24 24' fill='none' stroke='#6a9955' stroke-width='1.9' stroke-linecap='butt' stroke-linejoin='miter'><path d='M12 2v4M3 6h18M9 6c0 8-2 12-6 16M9 11.5h9c0 7-1 10-4 10'/></svg><svg style='display:inline-block;vertical-align:-4px' width='24' height='24' viewBox='0 0 24 24' fill='none' stroke='#6a9955' stroke-width='1.9' stroke-linecap='butt' stroke-linejoin='miter'><path d='M2 8h6M5 3v17l-2 1.5M2 15l6-3M14.5 2v3M10 5.5h11M12 6l1.5 3.5M18.5 6l-1.5 3.5M9 10.5h13M15 11l-3 10M10 15h12M12 17l8 5'/></svg>canActivate<svg style='display:inline-block;vertical-align:-4px' width='24' height='24' viewBox='0 0 24 24'><path d='M5 18.5c1.2 0 2 .8 2 1.8 0 1.4-1 2.6-2.4 3' stroke='#6a9955' stroke-width='2' fill='none'/></svg><svg style='display:inline-block;vertical-align:-4px' width='24' height='24' viewBox='0 0 24 24' fill='none' stroke='#6a9955' stroke-width='1.9' stroke-linecap='butt' stroke-linejoin='miter'><path d='M2 8h6M5 3v17l-2 1.5M2 15l6-3M14.5 2v3M10 5.5h11M12 6l1.5 3.5M18.5 6l-1.5 3.5M9 10.5h13M15 11l-3 10M10 15h12M12 17l8 5'/></svg><svg style='display:inline-block;vertical-align:-4px' width='24' height='24' viewBox='0 0 24 24' fill='none' stroke='#6a9955' stroke-width='1.9' stroke-linecap='butt' stroke-linejoin='miter'><path d='M2 7h20M10 2.5L4.5 21.5M9.5 11.5h10.5v10M9.5 15h10.5M9.5 18.5h10.5'/></svg><svg style='display:inline-block;vertical-align:-4px' width='24' height='24' viewBox='0 0 24 24' fill='none' stroke='#6a9955' stroke-width='1.9' stroke-linecap='butt' stroke-linejoin='miter'><path d='M12 2v4M3 6h18M9 6c0 8-2 12-6 16M9 11.5h9c0 7-1 10-4 10'/></svg><svg style='display:inline-block;vertical-align:-4px' width='24' height='24' viewBox='0 0 24 24' fill='none' stroke='#6a9955' stroke-width='1.9' stroke-linecap='butt' stroke-linejoin='miter'><path d='M2 8h6M5 3v17l-2 1.5M2 15l6-3M14.5 2v3M10 5.5h11M12 6l1.5 3.5M18.5 6l-1.5 3.5M9 10.5h13M15 11l-3 10M10 15h12M12 17l8 5'/></svg><svg style='display:inline-block;vertical-align:-4px' width='24' height='24' viewBox='0 0 24 24' fill='none' stroke='#6a9955' stroke-width='1.9' stroke-linecap='butt' stroke-linejoin='miter'><path d='M4 5h16v15H4z'/></svg><svg style='display:inline-block;vertical-align:-4px' width='24' height='24' viewBox='0 0 24 24' fill='none' stroke='#6a9955' stroke-width='1.9' stroke-linecap='butt' stroke-linejoin='miter'><path d='M6 3h12v8H6zM6 7h12M3 13.5h18M12 13.5v8M7.5 16l-3.5 5M12 17.5h6M12 21h9'/></svg><svg style='display:inline-block;vertical-align:-4px' width='24' height='24' viewBox='0 0 24 24' fill='none' stroke='#6a9955' stroke-width='1.9' stroke-linecap='butt' stroke-linejoin='miter'><path d='M3 5l2.5 2.5M2 11h4v7l-3 3M5 20.5c4 .8 10 .8 17 .5M9 6h12M15 2.5v3.5M10 11h10M12 11l7 8M19 11l-8 9'/></svg><svg style='display:inline-block;vertical-align:-4px' width='24' height='24' viewBox='0 0 24 24' fill='none' stroke='#6a9955' stroke-width='1.9' stroke-linecap='butt' stroke-linejoin='miter'><path d='M2 7h20M10 2.5L4.5 21.5M9.5 11.5h10.5v10M9.5 15h10.5M9.5 18.5h10.5'/></svg>boolean<svg style='display:inline-block;vertical-align:-4px' width='24' height='24' viewBox='0 0 24 24' fill='none' stroke='#6a9955' stroke-width='1.9' stroke-linecap='butt' stroke-linejoin='miter'><path d='M3 3.5l2.5 2M2 9.5l2.5 2M2.5 21l4-7M10 8h11M15.5 3v10M9 13h13M13.5 14l-3 7h11M17 17l3 3.5'/></svg><svg style='display:inline-block;vertical-align:-4px' width='24' height='24' viewBox='0 0 24 24'><path d='M5 18.5c1.2 0 2 .8 2 1.8 0 1.4-1 2.6-2.4 3' stroke='#6a9955' stroke-width='2' fill='none'/></svg><svg style='display:inline-block;vertical-align:-4px' width='24' height='24' viewBox='0 0 24 24' fill='none' stroke='#6a9955' stroke-width='1.9' stroke-linecap='butt' stroke-linejoin='miter'><path d='M3 5l2.5 2.5M2 11h4v7l-3 3M5 20.5c4 .8 10 .8 17 .5M9 6h12M15 2.5v3.5M10 11h10M12 11l7 8M19 11l-8 9'/></svg><svg style='display:inline-block;vertical-align:-4px' width='24' height='24' viewBox='0 0 24 24' fill='none' stroke='#6a9955' stroke-width='1.9' stroke-linecap='butt' stroke-linejoin='miter'><path d='M6 3h12v8H6zM6 7h12M3 13.5h18M12 13.5v8M7.5 16l-3.5 5M12 17.5h6M12 21h9'/></svg><svg style='display:inline-block;vertical-align:-4px' width='24' height='24' viewBox='0 0 24 24' fill='none' stroke='#6a9955' stroke-width='1.9' stroke-linecap='butt' stroke-linejoin='miter'><path d='M12 2v3M3 8.5V5h18v3.5M7 9v11.5h13V17M7 14.5l12-3'/></svg><svg style='display:inline-block;vertical-align:-4px' width='24' height='24' viewBox='0 0 24 24' fill='none' stroke='#6a9955' stroke-width='1.9' stroke-linecap='butt' stroke-linejoin='miter'><path d='M6 3h12v8H6zM6 7h12M3 13.5h18M12 13.5v8M7.5 16l-3.5 5M12 17.5h6M12 21h9'/></svg><svg style='display:inline-block;vertical-align:-4px' width='24' height='24' viewBox='0 0 24 24' fill='none' stroke='#6a9955' stroke-width='1.9' stroke-linecap='butt' stroke-linejoin='miter'><path d='M12 2L2 11M12 2l10 9M12 8v14'/></svg><svg style='display:inline-block;vertical-align:-4px' width='24' height='24' viewBox='0 0 24 24' fill='none' stroke='#6a9955' stroke-width='1.9' stroke-linecap='butt' stroke-linejoin='miter'><path d='M12 2v4M3 6h18M9 6c0 8-2 12-6 16M9 11.5h9c0 7-1 10-4 10'/></svg><svg style='display:inline-block;vertical-align:-4px' width='24' height='24' viewBox='0 0 24 24' fill='none' stroke='#6a9955' stroke-width='1.9' stroke-linecap='butt' stroke-linejoin='miter'><path d='M3 5l2.5 2.5M2 11h4v7l-3 3M5 20.5c4 .8 10 .8 17 .5M9 6h12M15 2.5v3.5M10 11h10M12 11l7 8M19 11l-8 9'/></svg><svg style='display:inline-block;vertical-align:-4px' width='24' height='24' viewBox='0 0 24 24' fill='none' stroke='#6a9955' stroke-width='1.9' stroke-linecap='butt' stroke-linejoin='miter'><path d='M3 3h18v18H3zM7 7h10v10H7zM10 10.5h4v3h-4z'/></svg><svg style='display:inline-block;vertical-align:-4px' width='24' height='24' viewBox='0 0 24 24' fill='none' stroke='#6a9955' stroke-width='1.9' stroke-linecap='butt' stroke-linejoin='miter'><path d='M12 2v3M3 8.5V5h18v3.5M7 9v11.5h13V17M7 14.5l12-3'/></svg><svg style='display:inline-block;vertical-align:-4px' width='24' height='24' viewBox='0 0 24 24' fill='none' stroke='#6a9955' stroke-width='1.9' stroke-linecap='butt' stroke-linejoin='miter'><path d='M12 2v4M3 6h18M9 6c0 8-2 12-6 16M9 11.5h9c0 7-1 10-4 10'/></svg></span></div><div class='a mono' style='left:700px;top:1306px;transform:scaleY(1.13);width:114px;text-align:right;height:36px;line-height:36px;font-size:24px;color:#6e7681'>9</div><div class='a mono nw' style='left:867px;top:1306px;height:36px;line-height:36px;font-size:24px;letter-spacing:0.04px;transform:scaleY(1.13);-webkit-text-stroke:0.35px currentColor;'><span style='color:#cccccc'> </span><span style='color:#cccccc'> </span><span style='color:#6a9955'>// <svg style='display:inline-block;vertical-align:-4px' width='24' height='24' viewBox='0 0 24 24' fill='none' stroke='#6a9955' stroke-width='1.9' stroke-linecap='butt' stroke-linejoin='miter'><path d='M4 5h16v15H4z'/></svg><svg style='display:inline-block;vertical-align:-4px' width='24' height='24' viewBox='0 0 24 24' fill='none' stroke='#6a9955' stroke-width='1.9' stroke-linecap='butt' stroke-linejoin='miter'><path d='M12 2L2 11M12 2l10 9M12 8v14'/></svg><svg style='display:inline-block;vertical-align:-4px' width='24' height='24' viewBox='0 0 24 24' fill='none' stroke='#6a9955' stroke-width='1.9' stroke-linecap='butt' stroke-linejoin='miter'><path d='M12 2v3M3 8.5V5h18v3.5M7 9v11.5h13V17M7 14.5l12-3'/></svg><svg style='display:inline-block;vertical-align:-4px' width='24' height='24' viewBox='0 0 24 24' fill='none' stroke='#6a9955' stroke-width='1.9' stroke-linecap='butt' stroke-linejoin='miter'><path d='M12 2v3M3 8.5V5h18v3.5M7 9v11.5h13V17M7 14.5l12-3'/></svg><svg style='display:inline-block;vertical-align:-4px' width='24' height='24' viewBox='0 0 24 24' fill='none' stroke='#6a9955' stroke-width='1.9' stroke-linecap='butt' stroke-linejoin='miter'><path d='M2 8h6M5 3v17l-2 1.5M2 15l6-3M14.5 2v3M10 5.5h11M12 6l1.5 3.5M18.5 6l-1.5 3.5M9 10.5h13M15 11l-3 10M10 15h12M12 17l8 5'/></svg><svg style='display:inline-block;vertical-align:-4px' width='24' height='24' viewBox='0 0 24 24'><path d='M5 18.5c1.2 0 2 .8 2 1.8 0 1.4-1 2.6-2.4 3' stroke='#6a9955' stroke-width='2' fill='none'/></svg><svg style='display:inline-block;vertical-align:-4px' width='24' height='24' viewBox='0 0 24 24' fill='none' stroke='#6a9955' stroke-width='1.9' stroke-linecap='butt' stroke-linejoin='miter'><path d='M2 8h6M5 3v17l-2 1.5M2 15l6-3M14.5 2v3M10 5.5h11M12 6l1.5 3.5M18.5 6l-1.5 3.5M9 10.5h13M15 11l-3 10M10 15h12M12 17l8 5'/></svg><svg style='display:inline-block;vertical-align:-4px' width='24' height='24' viewBox='0 0 24 24' fill='none' stroke='#6a9955' stroke-width='1.9' stroke-linecap='butt' stroke-linejoin='miter'><path d='M2 7h20M10 2.5L4.5 21.5M9.5 11.5h10.5v10M9.5 15h10.5M9.5 18.5h10.5'/></svg><svg style='display:inline-block;vertical-align:-4px' width='24' height='24' viewBox='0 0 24 24' fill='none' stroke='#6a9955' stroke-width='1.9' stroke-linecap='butt' stroke-linejoin='miter'><path d='M2 8h6M5 3v17l-2 1.5M2 15l6-3M14.5 2v3M10 5.5h11M12 6l1.5 3.5M18.5 6l-1.5 3.5M9 10.5h13M15 11l-3 10M10 15h12M12 17l8 5'/></svg><svg style='display:inline-block;vertical-align:-4px' width='24' height='24' viewBox='0 0 24 24' fill='none' stroke='#6a9955' stroke-width='1.9' stroke-linecap='butt' stroke-linejoin='miter'><path d='M12 2L2 11M12 2l10 9M12 8v14'/></svg><svg style='display:inline-block;vertical-align:-4px' width='24' height='24' viewBox='0 0 24 24' fill='none' stroke='#6a9955' stroke-width='1.9' stroke-linecap='butt' stroke-linejoin='miter'><path d='M4 5h16v15H4z'/></svg><svg style='display:inline-block;vertical-align:-4px' width='24' height='24' viewBox='0 0 24 24' fill='none' stroke='#6a9955' stroke-width='1.9' stroke-linecap='butt' stroke-linejoin='miter'><path d='M12 2v4M3 6h18M9 6c0 8-2 12-6 16M9 11.5h9c0 7-1 10-4 10'/></svg><svg style='display:inline-block;vertical-align:-4px' width='24' height='24' viewBox='0 0 24 24' fill='none' stroke='#6a9955' stroke-width='1.9' stroke-linecap='butt' stroke-linejoin='miter'><path d='M12 2L2 11M12 2l10 9M12 8v14'/></svg><svg style='display:inline-block;vertical-align:-4px' width='24' height='24' viewBox='0 0 24 24' fill='none' stroke='#6a9955' stroke-width='1.9' stroke-linecap='butt' stroke-linejoin='miter'><path d='M12 2v3M3 8.5V5h18v3.5M7 9v11.5h13V17M7 14.5l12-3'/></svg>CanActivate<svg style='display:inline-block;vertical-align:-4px' width='24' height='24' viewBox='0 0 24 24'><path d='M5 18.5c1.2 0 2 .8 2 1.8 0 1.4-1 2.6-2.4 3' stroke='#6a9955' stroke-width='2' fill='none'/></svg><svg style='display:inline-block;vertical-align:-4px' width='24' height='24' viewBox='0 0 24 24' fill='none' stroke='#6a9955' stroke-width='1.9' stroke-linecap='butt' stroke-linejoin='miter'><path d='M3 3.5l2.5 2M2 9.5l2.5 2M2.5 21l4-7M10 8h11M15.5 3v10M9 13h13M13.5 14l-3 7h11M17 17l3 3.5'/></svg><svg style='display:inline-block;vertical-align:-4px' width='24' height='24' viewBox='0 0 24 24' fill='none' stroke='#6a9955' stroke-width='1.9' stroke-linecap='butt' stroke-linejoin='miter'><path d='M12 2v4M3 6h18M9 6c0 8-2 12-6 16M9 11.5h9c0 7-1 10-4 10'/></svg><svg style='display:inline-block;vertical-align:-4px' width='24' height='24' viewBox='0 0 24 24' fill='none' stroke='#6a9955' stroke-width='1.9' stroke-linecap='butt' stroke-linejoin='miter'><path d='M12 2v3M3 8.5V5h18v3.5M7 9v11.5h13V17M7 14.5l12-3'/></svg>canActivate</span></div><div class='a mono' style='left:700px;top:1342px;transform:scaleY(1.13);width:114px;text-align:right;height:36px;line-height:36px;font-size:24px;color:#6e7681'>10</div><div class='a mono nw' style='left:867px;top:1342px;height:36px;line-height:36px;font-size:24px;letter-spacing:0.04px;transform:scaleY(1.13);-webkit-text-stroke:0.35px currentColor;'><span style='color:#cccccc'> </span><span style='color:#cccccc'> </span><span style='color:#dcdcaa'>canActivate</span><span style='color:#da70d6'>(</span></div><div class='a mono' style='left:700px;top:1378px;transform:scaleY(1.13);width:114px;text-align:right;height:36px;line-height:36px;font-size:24px;color:#6e7681'>11</div><div class='a mono nw' style='left:867px;top:1378px;height:36px;line-height:36px;font-size:24px;letter-spacing:0.04px;transform:scaleY(1.13);-webkit-text-stroke:0.35px currentColor;'><span style='color:#cccccc'> </span><span style='color:#cccccc'> </span><span style='color:#cccccc'> </span><span style='color:#cccccc'> </span><span style='color:#7ba5bd'>route</span><span style='color:#cccccc'>:</span><span style='color:#cccccc'> </span><span style='color:#4ec9b0'>ActivatedRouteSnapshot</span><span style='color:#cccccc'>,</span></div><div class='a mono' style='left:700px;top:1414px;transform:scaleY(1.13);width:114px;text-align:right;height:36px;line-height:36px;font-size:24px;color:#6e7681'>12</div><div class='a mono nw' style='left:867px;top:1414px;height:36px;line-height:36px;font-size:24px;letter-spacing:0.04px;transform:scaleY(1.13);-webkit-text-stroke:0.35px currentColor;'><span style='color:#cccccc'> </span><span style='color:#cccccc'> </span><span style='color:#cccccc'> </span><span style='color:#cccccc'> </span><span style='color:#7ba5bd'>state</span><span style='color:#cccccc'>:</span><span style='color:#cccccc'> </span><span style='color:#4ec9b0'>RouterStateSnapshot</span><span style='color:#da70d6'>)</span><span style='color:#cccccc'>:</span><span style='color:#cccccc'> </span><span style='color:#4ec9b0'>Observable</span><span style='color:#da70d6'>&lt;</span><span style='color:#4ec9b0'>boolean</span><span style='color:#cccccc'> </span><span style='color:#cccccc'>|</span><span style='color:#cccccc'> </span><span style='color:#4ec9b0'>UrlTree</span><span style='color:#da70d6'>&gt;</span><span style='color:#cccccc'> </span><span style='color:#cccccc'>|</span><span style='color:#cccccc'> </span><span style='color:#4ec9b0'>Promise</span><span style='color:#da70d6'>&lt;</span><span style='color:#4ec9b0'>boolean</span><span style='color:#cccccc'> </span><span style='color:#cccccc'>|</span><span style='color:#cccccc'> </span><span style='color:#4ec9b0'>UrlTree</span><span style='color:#da70d6'>&gt;</span><span style='color:#cccccc'> </span><span style='color:#cccccc'>|</span><span style='color:#cccccc'> </span><span style='color:#4ec9b0'>boolean</span><span style='color:#cccccc'> </span><span style='color:#cccccc'>|</span><span style='color:#cccccc'> </span><span style='color:#4ec9b0'>UrlTree</span><span style='color:#cccccc'> </span><span style='color:#da70d6'>{</span></div><div class='a mono' style='left:700px;top:1450px;transform:scaleY(1.13);width:114px;text-align:right;height:36px;line-height:36px;font-size:24px;color:#6e7681'>13</div><div class='a mono nw' style='left:867px;top:1450px;height:36px;line-height:36px;font-size:24px;letter-spacing:0.04px;transform:scaleY(1.13);-webkit-text-stroke:0.35px currentColor;'><span style='color:#cccccc'> </span><span style='color:#cccccc'> </span><span style='color:#cccccc'> </span><span style='color:#cccccc'> </span><span style='color:#c586c0'>return</span><span style='color:#cccccc'> </span><span style='color:#569cd6'>true</span><span style='color:#cccccc'>;</span></div><div class='a mono' style='left:700px;top:1486px;transform:scaleY(1.13);width:114px;text-align:right;height:36px;line-height:36px;font-size:24px;color:#6e7681'>14</div><div class='a mono nw' style='left:867px;top:1486px;height:36px;line-height:36px;font-size:24px;letter-spacing:0.04px;transform:scaleY(1.13);-webkit-text-stroke:0.35px currentColor;'><span style='color:#cccccc'> </span><span style='color:#cccccc'> </span><span style='color:#da70d6'>}</span></div><div class='a mono' style='left:700px;top:1522px;transform:scaleY(1.13);width:114px;text-align:right;height:36px;line-height:36px;font-size:24px;color:#6e7681'>15</div><div class='a mono nw' style='left:867px;top:1522px;height:36px;line-height:36px;font-size:24px;letter-spacing:0.04px;transform:scaleY(1.13);-webkit-text-stroke:0.35px currentColor;'></div><div class='a mono' style='left:700px;top:1558px;transform:scaleY(1.13);width:114px;text-align:right;height:36px;line-height:36px;font-size:24px;color:#6e7681'>16</div><div class='a mono nw' style='left:867px;top:1558px;height:36px;line-height:36px;font-size:24px;letter-spacing:0.04px;transform:scaleY(1.13);-webkit-text-stroke:0.35px currentColor;'><span style='color:#ffd700'>}</span></div><div class='a mono' style='left:700px;top:1594px;transform:scaleY(1.13);width:114px;text-align:right;height:36px;line-height:36px;font-size:24px;color:#cccccc'>17</div><div class='a mono nw' style='left:867px;top:1594px;height:36px;line-height:36px;font-size:24px;letter-spacing:0.04px;transform:scaleY(1.13);-webkit-text-stroke:0.35px currentColor;'></div></div></div><div class='a' style='left:2768px;top:1016px;width:14px;height:644px;background:linear-gradient(90deg,#00000000,#00000060)'></div><div class='a' style='left:2790px;top:1017px;width:232px;height:643px;overflow:hidden'><div class='a mono' style='left:0;top:0;transform:scale(0.1388888888888889,0.1111111111111111);transform-origin:0 0;font-size:24px;line-height:36px;white-space:pre;width:40000px'><div style='height:36px;font-weight:bold'><span style='color:#c586c0'>import</span><span style='color:#cccccc'> </span><span style='color:#bbbbbb'>{</span><span style='color:#cccccc'> </span><span style='color:#9cdcfe'>Injectable</span><span style='color:#cccccc'> </span><span style='color:#bbbbbb'>}</span><span style='color:#cccccc'> </span><span style='color:#c586c0'>from</span><span style='color:#cccccc'> </span><span style='color:#ce9178'>'@angular/core'</span><span style='color:#cccccc'>;</span></div><div style='height:36px;font-weight:bold'><span style='color:#c586c0'>import</span><span style='color:#cccccc'> </span><span style='color:#bbbbbb'>{</span><span style='color:#cccccc'> </span><span style='color:#9cdcfe'>ActivatedRouteSnapshot</span><span style='color:#cccccc'>,</span><span style='color:#cccccc'> </span><span style='color:#9cdcfe'>CanActivate</span><span style='color:#cccccc'>,</span><span style='color:#cccccc'> </span><span style='color:#9cdcfe'>RouterStateSnapshot</span><span style='color:#cccccc'>,</span><span style='color:#cccccc'> </span><span style='color:#9cdcfe'>UrlTree</span><span style='color:#cccccc'> </span><span style='color:#bbbbbb'>}</span><span style='color:#cccccc'> </span><span style='color:#c586c0'>from</span><span style='color:#cccccc'> </span><span style='color:#ce9178'>'@angular/router'</span><span style='color:#cccccc'>;</span></div><div style='height:36px;font-weight:bold'><span style='color:#c586c0'>import</span><span style='color:#cccccc'> </span><span style='color:#bbbbbb'>{</span><span style='color:#cccccc'> </span><span style='color:#9cdcfe'>Observable</span><span style='color:#cccccc'> </span><span style='color:#bbbbbb'>}</span><span style='color:#cccccc'> </span><span style='color:#c586c0'>from</span><span style='color:#cccccc'> </span><span style='color:#ce9178'>'rxjs'</span><span style='color:#cccccc'>;</span></div><div style='height:36px;font-weight:bold'>&nbsp;</div><div style='height:36px;font-weight:bold'><span style='color:#cccccc'>@</span><span style='color:#4ec9b0'>Injectable</span><span style='color:#bbbbbb'>(</span><span style='color:#bbbbbb'>{</span></div><div style='height:36px;font-weight:bold'><span style='color:#cccccc'> </span><span style='color:#cccccc'> </span><span style='color:#9cdcfe'>providedIn</span><span style='color:#cccccc'>:</span><span style='color:#cccccc'> </span><span style='color:#ce9178'>'root'</span></div><div style='height:36px;font-weight:bold'><span style='color:#bbbbbb'>}</span><span style='color:#bbbbbb'>)</span></div><div style='height:36px;font-weight:bold'><span style='color:#c586c0'>export</span><span style='color:#cccccc'> </span><span style='color:#569cd6'>class</span><span style='color:#cccccc'> </span><span style='color:#4ec9b0'>AuthGardGuard</span><span style='color:#cccccc'> </span><span style='color:#569cd6'>implements</span><span style='color:#cccccc'> </span><span style='color:#4ec9b0'>CanActivate</span><span style='color:#cccccc'> </span><span style='color:#bbbbbb'>{</span><span style='color:#cccccc'> </span><span style='color:#6a9955'>// <span style='display:inline-block;width:22px;height:22px;margin-right:2px;background:#6a9955;opacity:.5;vertical-align:-3px'></span><span style='display:inline-block;width:22px;height:22px;margin-right:2px;background:#6a9955;opacity:.5;vertical-align:-3px'></span>CanActivate<span style='display:inline-block;width:22px;height:22px;margin-right:2px;background:#6a9955;opacity:.5;vertical-align:-3px'></span><span style='display:inline-block;width:22px;height:22px;margin-right:2px;background:#6a9955;opacity:.5;vertical-align:-3px'></span><span style='display:inline-block;width:22px;height:22px;margin-right:2px;background:#6a9955;opacity:.5;vertical-align:-3px'></span><span style='display:inline-block;width:22px;height:22px;margin-right:2px;background:#6a9955;opacity:.5;vertical-align:-3px'></span><span style='display:inline-block;width:22px;height:22px;margin-right:2px;background:#6a9955;opacity:.5;vertical-align:-3px'></span><span style='display:inline-block;width:22px;height:22px;margin-right:2px;background:#6a9955;opacity:.5;vertical-align:-3px'></span><span style='display:inline-block;width:22px;height:22px;margin-right:2px;background:#6a9955;opacity:.5;vertical-align:-3px'></span><span style='display:inline-block;width:22px;height:22px;margin-right:2px;background:#6a9955;opacity:.5;vertical-align:-3px'></span><span style='display:inline-block;width:22px;height:22px;margin-right:2px;background:#6a9955;opacity:.5;vertical-align:-3px'></span><span style='display:inline-block;width:22px;height:22px;margin-right:2px;background:#6a9955;opacity:.5;vertical-align:-3px'></span><span style='display:inline-block;width:22px;height:22px;margin-right:2px;background:#6a9955;opacity:.5;vertical-align:-3px'></span><span style='display:inline-block;width:22px;height:22px;margin-right:2px;background:#6a9955;opacity:.5;vertical-align:-3px'></span>canActivate<span style='display:inline-block;width:22px;height:22px;margin-right:2px;background:#6a9955;opacity:.5;vertical-align:-3px'></span><span style='display:inline-block;width:22px;height:22px;margin-right:2px;background:#6a9955;opacity:.5;vertical-align:-3px'></span><span style='display:inline-block;width:22px;height:22px;margin-right:2px;background:#6a9955;opacity:.5;vertical-align:-3px'></span><span style='display:inline-block;width:22px;height:22px;margin-right:2px;background:#6a9955;opacity:.5;vertical-align:-3px'></span><span style='display:inline-block;width:22px;height:22px;margin-right:2px;background:#6a9955;opacity:.5;vertical-align:-3px'></span><span style='display:inline-block;width:22px;height:22px;margin-right:2px;background:#6a9955;opacity:.5;vertical-align:-3px'></span><span style='display:inline-block;width:22px;height:22px;margin-right:2px;background:#6a9955;opacity:.5;vertical-align:-3px'></span><span style='display:inline-block;width:22px;height:22px;margin-right:2px;background:#6a9955;opacity:.5;vertical-align:-3px'></span><span style='display:inline-block;width:22px;height:22px;margin-right:2px;background:#6a9955;opacity:.5;vertical-align:-3px'></span>boolean<span style='display:inline-block;width:22px;height:22px;margin-right:2px;background:#6a9955;opacity:.5;vertical-align:-3px'></span><span style='display:inline-block;width:22px;height:22px;margin-right:2px;background:#6a9955;opacity:.5;vertical-align:-3px'></span><span style='display:inline-block;width:22px;height:22px;margin-right:2px;background:#6a9955;opacity:.5;vertical-align:-3px'></span><span style='display:inline-block;width:22px;height:22px;margin-right:2px;background:#6a9955;opacity:.5;vertical-align:-3px'></span><span style='display:inline-block;width:22px;height:22px;margin-right:2px;background:#6a9955;opacity:.5;vertical-align:-3px'></span><span style='display:inline-block;width:22px;height:22px;margin-right:2px;background:#6a9955;opacity:.5;vertical-align:-3px'></span><span style='display:inline-block;width:22px;height:22px;margin-right:2px;background:#6a9955;opacity:.5;vertical-align:-3px'></span><span style='display:inline-block;width:22px;height:22px;margin-right:2px;background:#6a9955;opacity:.5;vertical-align:-3px'></span><span style='display:inline-block;width:22px;height:22px;margin-right:2px;background:#6a9955;opacity:.5;vertical-align:-3px'></span><span style='display:inline-block;width:22px;height:22px;margin-right:2px;background:#6a9955;opacity:.5;vertical-align:-3px'></span><span style='display:inline-block;width:22px;height:22px;margin-right:2px;background:#6a9955;opacity:.5;vertical-align:-3px'></span><span style='display:inline-block;width:22px;height:22px;margin-right:2px;background:#6a9955;opacity:.5;vertical-align:-3px'></span></span></div><div style='height:36px;font-weight:bold'><span style='color:#cccccc'> </span><span style='color:#cccccc'> </span><span style='color:#6a9955'>// <span style='display:inline-block;width:22px;height:22px;margin-right:2px;background:#6a9955;opacity:.5;vertical-align:-3px'></span><span style='display:inline-block;width:22px;height:22px;margin-right:2px;background:#6a9955;opacity:.5;vertical-align:-3px'></span><span style='display:inline-block;width:22px;height:22px;margin-right:2px;background:#6a9955;opacity:.5;vertical-align:-3px'></span><span style='display:inline-block;width:22px;height:22px;margin-right:2px;background:#6a9955;opacity:.5;vertical-align:-3px'></span><span style='display:inline-block;width:22px;height:22px;margin-right:2px;background:#6a9955;opacity:.5;vertical-align:-3px'></span><span style='display:inline-block;width:22px;height:22px;margin-right:2px;background:#6a9955;opacity:.5;vertical-align:-3px'></span><span style='display:inline-block;width:22px;height:22px;margin-right:2px;background:#6a9955;opacity:.5;vertical-align:-3px'></span><span style='display:inline-block;width:22px;height:22px;margin-right:2px;background:#6a9955;opacity:.5;vertical-align:-3px'></span><span style='display:inline-block;width:22px;height:22px;margin-right:2px;background:#6a9955;opacity:.5;vertical-align:-3px'></span><span style='display:inline-block;width:22px;height:22px;margin-right:2px;background:#6a9955;opacity:.5;vertical-align:-3px'></span><span style='display:inline-block;width:22px;height:22px;margin-right:2px;background:#6a9955;opacity:.5;vertical-align:-3px'></span><span style='display:inline-block;width:22px;height:22px;margin-right:2px;background:#6a9955;opacity:.5;vertical-align:-3px'></span><span style='display:inline-block;width:22px;height:22px;margin-right:2px;background:#6a9955;opacity:.5;vertical-align:-3px'></span><span style='display:inline-block;width:22px;height:22px;margin-right:2px;background:#6a9955;opacity:.5;vertical-align:-3px'></span>CanActivate<span style='display:inline-block;width:22px;height:22px;margin-right:2px;background:#6a9955;opacity:.5;vertical-align:-3px'></span><span style='display:inline-block;width:22px;height:22px;margin-right:2px;background:#6a9955;opacity:.5;vertical-align:-3px'></span><span style='display:inline-block;width:22px;height:22px;margin-right:2px;background:#6a9955;opacity:.5;vertical-align:-3px'></span><span style='display:inline-block;width:22px;height:22px;margin-right:2px;background:#6a9955;opacity:.5;vertical-align:-3px'></span>canActivate</span></div><div style='height:36px;font-weight:bold'><span style='color:#cccccc'> </span><span style='color:#cccccc'> </span><span style='color:#dcdcaa'>canActivate</span><span style='color:#bbbbbb'>(</span></div><div style='height:36px;font-weight:bold'><span style='color:#cccccc'> </span><span style='color:#cccccc'> </span><span style='color:#cccccc'> </span><span style='color:#cccccc'> </span><span style='color:#7ba5bd'>route</span><span style='color:#cccccc'>:</span><span style='color:#cccccc'> </span><span style='color:#4ec9b0'>ActivatedRouteSnapshot</span><span style='color:#cccccc'>,</span></div><div style='height:36px;font-weight:bold'><span style='color:#cccccc'> </span><span style='color:#cccccc'> </span><span style='color:#cccccc'> </span><span style='color:#cccccc'> </span><span style='color:#7ba5bd'>state</span><span style='color:#cccccc'>:</span><span style='color:#cccccc'> </span><span style='color:#4ec9b0'>RouterStateSnapshot</span><span style='color:#bbbbbb'>)</span><span style='color:#cccccc'>:</span><span style='color:#cccccc'> </span><span style='color:#4ec9b0'>Observable</span><span style='color:#da70d6'>&lt;</span><span style='color:#4ec9b0'>boolean</span><span style='color:#cccccc'> </span><span style='color:#cccccc'>|</span><span style='color:#cccccc'> </span><span style='color:#4ec9b0'>UrlTree</span><span style='color:#da70d6'>&gt;</span><span style='color:#cccccc'> </span><span style='color:#cccccc'>|</span><span style='color:#cccccc'> </span><span style='color:#4ec9b0'>Promise</span><span style='color:#da70d6'>&lt;</span><span style='color:#4ec9b0'>boolean</span><span style='color:#cccccc'> </span><span style='color:#cccccc'>|</span><span style='color:#cccccc'> </span><span style='color:#4ec9b0'>UrlTree</span><span style='color:#da70d6'>&gt;</span><span style='color:#cccccc'> </span><span style='color:#cccccc'>|</span><span style='color:#cccccc'> </span><span style='color:#4ec9b0'>boolean</span><span style='color:#cccccc'> </span><span style='color:#cccccc'>|</span><span style='color:#cccccc'> </span><span style='color:#4ec9b0'>UrlTree</span><span style='color:#cccccc'> </span><span style='color:#bbbbbb'>{</span></div><div style='height:36px;font-weight:bold'><span style='color:#cccccc'> </span><span style='color:#cccccc'> </span><span style='color:#cccccc'> </span><span style='color:#cccccc'> </span><span style='color:#c586c0'>return</span><span style='color:#cccccc'> </span><span style='color:#569cd6'>true</span><span style='color:#cccccc'>;</span></div><div style='height:36px;font-weight:bold'><span style='color:#cccccc'> </span><span style='color:#cccccc'> </span><span style='color:#bbbbbb'>}</span></div><div style='height:36px;font-weight:bold'>&nbsp;</div><div style='height:36px;font-weight:bold'><span style='color:#bbbbbb'>}</span></div><div style='height:36px;font-weight:bold'>&nbsp;</div></div></div><div class='a' style='left:3022px;top:1016px;width:2px;height:644px;background:#2a2a2a;'></div><div class='t' style='left:774px;top:1667.0px;height:60px;line-height:60px;font-family:"Liberation Sans";font-size:21.5px;color:#9d9d9d;font-weight:normal;letter-spacing:0px;'>PROBLEMS</div><div class='t' style='left:941.5px;top:1667.0px;height:60px;line-height:60px;font-family:"Liberation Sans";font-size:21.5px;color:#9d9d9d;font-weight:normal;letter-spacing:0.2px;'>OUTPUT</div><div class='t' style='left:1082px;top:1667.0px;height:60px;line-height:60px;font-family:"Liberation Sans";font-size:21.5px;color:#9d9d9d;font-weight:normal;letter-spacing:0px;'>DEBUG CONSOLE</div><div class='t' style='left:1319.5px;top:1667.0px;height:60px;line-height:60px;font-family:"Liberation Sans";font-size:21.5px;color:#9d9d9d;font-weight:normal;letter-spacing:0.2px;'>COMMENTS</div><div class='t' style='left:1497px;top:1667.0px;height:60px;line-height:60px;font-family:"Liberation Sans";font-size:21.5px;color:#9d9d9d;font-weight:normal;letter-spacing:0px;'>PORTS</div><div class='t' style='left:1619px;top:1667.0px;height:60px;line-height:60px;font-family:"Liberation Sans";font-size:21.5px;color:#e7e7e7;font-weight:normal;letter-spacing:0.15px;'>TERMINAL</div><div class='a' style='left:1615px;top:1715px;width:118px;height:2px;background:#0078d4;'></div><svg class='a' style='left:2806px;top:1682px;' width='28' height='28' viewBox='0 0 28 28'><path d='M14 2V26M2 14H26' stroke='#cccccc' stroke-width='2'/></svg><svg class='a' style='left:2846px;top:1690px;' width='16' height='12' viewBox='0 0 16 12'><path d='M1.5 2L8 8.5L14.5 2' stroke='#cccccc' stroke-width='1.8' fill='none'/></svg><div class='a' style='left:2888px;top:1694px;width:5px;height:5px;border-radius:50%;background:#cccccc'></div><div class='a' style='left:2898px;top:1694px;width:5px;height:5px;border-radius:50%;background:#cccccc'></div><div class='a' style='left:2908px;top:1694px;width:5px;height:5px;border-radius:50%;background:#cccccc'></div><svg class='a' style='left:2940px;top:1686px;' width='24' height='16' viewBox='0 0 24 16'><path d='M2 13L12 3L22 13' stroke='#cccccc' stroke-width='2' fill='none'/></svg><svg class='a' style='left:2993px;top:1685px;' width='22' height='22' viewBox='0 0 22 22'><path d='M2 2L20 20M20 2L2 20' stroke='#cccccc' stroke-width='2'/></svg><div class='a mono nw' style='left:773px;top:1733px;height:28px;line-height:28px;font-size:23.33px;letter-spacing:0.08px;transform:scaleY(1.14)'><span style='display:inline-block;width:14px;height:28px;vertical-align:top;position:relative'><svg style='position:absolute;left:0;top:7px' width='16' height='14' viewBox='0 0 16 14'><path d='M1 7H13M8 2.2L13.4 7L8 11.8' stroke='#23d18b' stroke-width='2.6' fill='none'/></svg></span><span style='color:#cccccc;font-weight:normal'>  </span><span style='color:#24b5dd;font-weight:bold'>angular-study</span><span style='color:#cccccc;font-weight:normal'> </span><span style='color:#3b8eea;font-weight:bold'>git:(</span><span style='color:#f14c4c;font-weight:bold'>main</span><span style='color:#3b8eea;font-weight:bold'>)</span><span style='color:#cccccc;font-weight:normal'> </span><span style='display:inline-block;width:14px;height:28px;vertical-align:top;position:relative'><svg style='position:absolute;left:0;top:6px' width='16' height='16' viewBox='0 0 16 16'><path d='M12.5 1.8C10 5 6.5 10 3.4 14.2M3.4 5.2C6 7.6 9 11 12 14.4' stroke='#e5e510' stroke-width='2.4' fill='none'/></svg></span><span style='color:#cccccc;font-weight:normal'> ng g c components/route/user/pages/login</span></div><div class='a mono nw' style='left:773px;top:1761px;height:28px;line-height:28px;font-size:23.33px;letter-spacing:0.08px;transform:scaleY(1.14)'><span style='color:#1fc986;font-weight:normal'>CREATE</span><span style='color:#cccccc;font-weight:normal'> src/app/components/route/user/pages/login/login.component.css (0 bytes)</span></div><div class='a mono nw' style='left:773px;top:1789px;height:28px;line-height:28px;font-size:23.33px;letter-spacing:0.08px;transform:scaleY(1.14)'><span style='color:#1fc986;font-weight:normal'>CREATE</span><span style='color:#cccccc;font-weight:normal'> src/app/components/route/user/pages/login/login.component.html (20 bytes)</span></div><div class='a mono nw' style='left:773px;top:1817px;height:28px;line-height:28px;font-size:23.33px;letter-spacing:0.08px;transform:scaleY(1.14)'><span style='color:#1fc986;font-weight:normal'>CREATE</span><span style='color:#cccccc;font-weight:normal'> src/app/components/route/user/pages/login/login.component.spec.ts (592 bytes)</span></div><div class='a mono nw' style='left:773px;top:1845px;height:28px;line-height:28px;font-size:23.33px;letter-spacing:0.08px;transform:scaleY(1.14)'><span style='color:#1fc986;font-weight:normal'>CREATE</span><span style='color:#cccccc;font-weight:normal'> src/app/components/route/user/pages/login/login.component.ts (271 bytes)</span></div><div class='a mono nw' style='left:773px;top:1873px;height:28px;line-height:28px;font-size:23.33px;letter-spacing:0.08px;transform:scaleY(1.14)'><span style='color:#11a8cd;font-weight:normal'>UPDATE</span><span style='color:#cccccc;font-weight:normal'> src/app/components/route/user/user.module.ts (358 bytes)</span></div><div class='a mono nw' style='left:773px;top:1901px;height:28px;line-height:28px;font-size:23.33px;letter-spacing:0.08px;transform:scaleY(1.14)'><span style='display:inline-block;width:14px;height:28px;vertical-align:top;position:relative'><svg style='position:absolute;left:0;top:7px' width='16' height='14' viewBox='0 0 16 14'><path d='M1 7H13M8 2.2L13.4 7L8 11.8' stroke='#23d18b' stroke-width='2.6' fill='none'/></svg></span><span style='color:#cccccc;font-weight:normal'>  </span><span style='color:#24b5dd;font-weight:bold'>angular-study</span><span style='color:#cccccc;font-weight:normal'> </span><span style='color:#3b8eea;font-weight:bold'>git:(</span><span style='color:#f14c4c;font-weight:bold'>main</span><span style='color:#3b8eea;font-weight:bold'>)</span><span style='color:#cccccc;font-weight:normal'> </span><span style='display:inline-block;width:14px;height:28px;vertical-align:top;position:relative'><svg style='position:absolute;left:0;top:6px' width='16' height='16' viewBox='0 0 16 16'><path d='M12.5 1.8C10 5 6.5 10 3.4 14.2M3.4 5.2C6 7.6 9 11 12 14.4' stroke='#e5e510' stroke-width='2.4' fill='none'/></svg></span><span style='color:#cccccc;font-weight:normal'> ng g guard components/route/authGard</span></div><div class='a mono nw' style='left:773px;top:1929px;height:28px;line-height:28px;font-size:23.33px;letter-spacing:0.08px;transform:scaleY(1.14)'><span style='color:#1fc986;font-weight:normal'>?</span><span style='color:#d2d2d2;font-weight:bold'> Which interfaces would you like to implement?</span><span style='color:#cccccc;font-weight:normal'> </span><span style='color:#11a8cd;font-weight:normal'>CanActivate</span></div><div class='a mono nw' style='left:773px;top:1957px;height:28px;line-height:28px;font-size:23.33px;letter-spacing:0.08px;transform:scaleY(1.14)'><span style='color:#1fc986;font-weight:normal'>CREATE</span><span style='color:#cccccc;font-weight:normal'> src/app/components/route/auth-gard.guard.spec.ts (352 bytes)</span></div><div class='a mono nw' style='left:773px;top:1985px;height:28px;line-height:28px;font-size:23.33px;letter-spacing:0.08px;transform:scaleY(1.14)'><span style='color:#1fc986;font-weight:normal'>CREATE</span><span style='color:#cccccc;font-weight:normal'> src/app/components/route/auth-gard.guard.ts (461 bytes)</span></div><div class='a mono nw' style='left:773px;top:2013px;height:28px;line-height:28px;font-size:23.33px;letter-spacing:0.08px;transform:scaleY(1.14)'><span style='display:inline-block;width:14px;height:28px;vertical-align:top;position:relative'><svg style='position:absolute;left:0;top:7px' width='16' height='14' viewBox='0 0 16 14'><path d='M1 7H13M8 2.2L13.4 7L8 11.8' stroke='#23d18b' stroke-width='2.6' fill='none'/></svg></span><span style='color:#cccccc;font-weight:normal'>  </span><span style='color:#24b5dd;font-weight:bold'>angular-study</span><span style='color:#cccccc;font-weight:normal'> </span><span style='color:#3b8eea;font-weight:bold'>git:(</span><span style='color:#f14c4c;font-weight:bold'>main</span><span style='color:#3b8eea;font-weight:bold'>)</span><span style='color:#cccccc;font-weight:normal'> </span><span style='display:inline-block;width:14px;height:28px;vertical-align:top;position:relative'><svg style='position:absolute;left:0;top:6px' width='16' height='16' viewBox='0 0 16 16'><path d='M12.5 1.8C10 5 6.5 10 3.4 14.2M3.4 5.2C6 7.6 9 11 12 14.4' stroke='#e5e510' stroke-width='2.4' fill='none'/></svg></span><span style='color:#cccccc;font-weight:normal'> </span></div><div class='a' style='left:1194px;top:2013px;width:14px;height:26px;border:2px solid #cccccc'></div><div class='a' style='left:747.5px;top:1738px;width:16px;height:16px;border-radius:50%;background:#1b7fb5'></div><div class='a' style='left:747.5px;top:1906px;width:16px;height:16px;border-radius:50%;background:#1b7fb5'></div><div class='a' style='left:747.5px;top:2018px;width:16px;height:16px;border-radius:50%;border:2.2px solid #6e6e6e'></div><div class='a' style='left:742px;top:1900px;width:4px;height:111px;background:#3c3c3c;'></div><div class='a' style='left:2594px;top:1732px;width:28px;height:308px;background:#1b1b1b;'></div><div class='a' style='left:2594px;top:1732px;width:1px;height:308px;background:#0c0c14;'></div><div class='a' style='left:2595px;top:1938px;width:27px;height:82px;background:#3c3c3c;'></div><div class='a' style='left:2595px;top:1732px;width:9px;height:8px;background:#1b7ba8;'></div><div class='a' style='left:2595px;top:1769.0px;width:9px;height:15.0px;background:#1b7ba8;'></div><div class='a' style='left:2595px;top:1813.9px;width:9px;height:15.0px;background:#1b7ba8;'></div><div class='a' style='left:2595px;top:1859.0px;width:9px;height:15.0px;background:#1b7ba8;'></div><div class='a' style='left:2595px;top:1904.0px;width:9px;height:15.0px;background:#1b7ba8;'></div><div class='a' style='left:2595px;top:1926.9px;width:9px;height:15.0px;background:#1b7ba8;'></div><div class='a' style='left:2595px;top:1972.1px;width:9px;height:15.0px;background:#1b7ba8;'></div><div class='a' style='left:2595px;top:2002px;width:9px;height:15px;background:#777777;'></div><div class='a' style='left:2622px;top:1732px;width:2px;height:308px;background:#2b2b2b;'></div><div class='a' style='left:2623px;top:1773px;width:3px;height:45px;background:#0078d4;'></div><svg class='a' style='left:2645px;top:1738px;' width='30' height='28' viewBox='0 0 30 28'><rect x='1.5' y='1.5' width='26' height='25' rx='2' stroke='#cccccc' stroke-width='2' fill='none'/><path d='M7 8.5L12.5 13.5L7 18.5M13.5 20H21' stroke='#cccccc' stroke-width='2' fill='none'/></svg><div class='t' style='left:2683px;top:1723.0px;height:60px;line-height:60px;font-family:"Liberation Sans";font-size:27px;color:#cccccc;font-weight:normal;letter-spacing:0px;'>node</div><svg class='a' style='left:2645px;top:1783px;' width='30' height='28' viewBox='0 0 30 28'><rect x='1.5' y='1.5' width='26' height='25' rx='2' stroke='#cccccc' stroke-width='2' fill='none'/><path d='M7 8.5L12.5 13.5L7 18.5M13.5 20H21' stroke='#cccccc' stroke-width='2' fill='none'/></svg><div class='t' style='left:2683px;top:1768.0px;height:60px;line-height:60px;font-family:"Liberation Sans";font-size:27px;color:#cccccc;font-weight:normal;letter-spacing:0px;'>zsh</div></div><div id='frame'></div></body></html>
